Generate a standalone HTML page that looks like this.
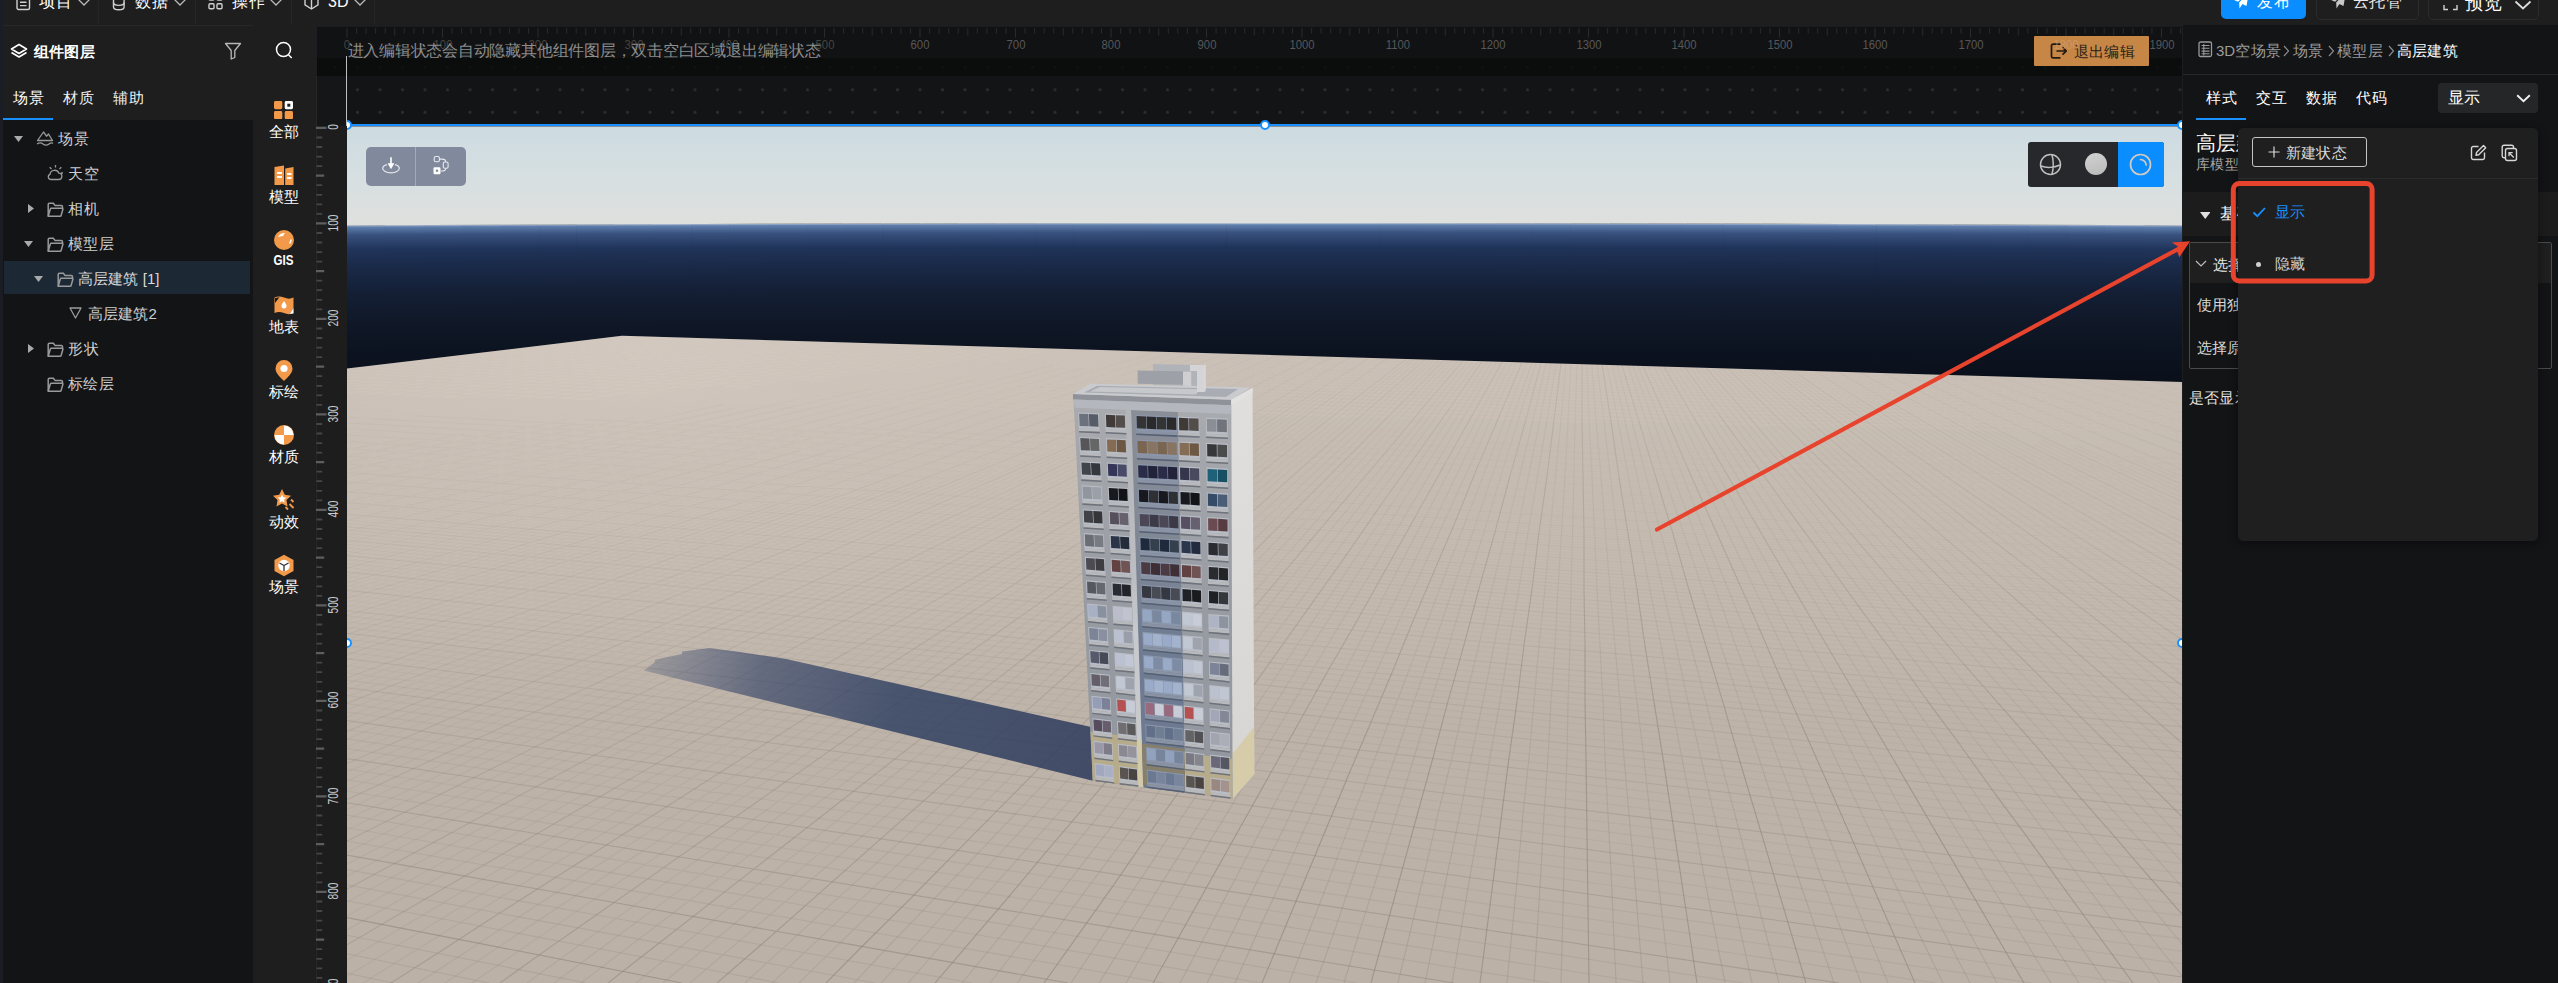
<!DOCTYPE html>
<html lang="zh"><head><meta charset="utf-8"><title>3D editor</title><style>html,body{margin:0;padding:0;}
html{width:2558px;height:983px;overflow:hidden;background:#131416;}
body{width:2558px;height:983px;overflow:hidden;background:#131416;position:relative;font-family:"Liberation Sans",sans-serif;}
.b{position:absolute;display:block;}
.t{position:absolute;white-space:nowrap;overflow:visible;}
.rl{font-size:12px;line-height:14px;height:14px;text-align:center;transform:scaleX(.94);}
.vl{font-size:14px;line-height:16px;height:16px;width:40px;text-align:center;color:#c9c9c9;transform:rotate(-90deg) scaleX(.73);}
</style></head>
<body>
<div class="b" style="left:0;top:0;width:2558px;height:983px;overflow:hidden;">
<div class="b" style="left:0px;top:0px;width:2558px;height:26px;background:#1e1e1e;"></div>
<div class="b" style="left:3px;top:26px;width:250px;height:94px;background:#1e1e1e;"></div>
<div class="b" style="left:3px;top:120px;width:250px;height:863px;background:#131416;"></div>
<div class="b" style="left:253px;top:26px;width:63px;height:957px;background:#1e1e1e;"></div>
<div class="b" style="left:0px;top:0px;width:3px;height:983px;background:#1b1d24;"></div>
<div class="b" style="left:3px;top:25px;width:250px;height:1px;background:#25272b;"></div>
<div class="b" style="left:98px;top:0px;width:1px;height:24px;background:#252627;"></div>
<div class="b" style="left:195px;top:0px;width:1px;height:24px;background:#252627;"></div>
<div class="b" style="left:291px;top:0px;width:1px;height:24px;background:#252627;"></div>
<div class="b" style="left:374px;top:0px;width:1px;height:24px;background:#252627;"></div>
<svg class="b" style="left:16px;top:-6px;" width="15" height="17" viewBox="0 0 15 17"><rect x="1" y="1" width="12.5" height="14.5" rx="1.5" fill="none" stroke="#d0d0d0" stroke-width="1.4"/><path d="M4 8.2h6.5M4 11.6h6.5" stroke="#d0d0d0" stroke-width="1.4"/></svg>
<div class="t" style="left:39px;top:-8.0px;font-size:16px;line-height:20px;height:20px;color:#fff;width:32.6px;text-align:justify;text-align-last:justify;text-justify:inter-character;">项目</div>
<svg class="b" style="left:78px;top:-1px;" width="12" height="8" viewBox="0 0 12 8"><path d="M0.5 0.5 L6.0 6 L11.5 0.5" fill="none" stroke="#bbb" stroke-width="1.3"/></svg>
<svg class="b" style="left:112px;top:-6px;" width="14" height="17" viewBox="0 0 14 17"><path d="M1.5 3.5v9.5c0 1.6 2.4 2.8 5.3 2.8s5.3-1.2 5.3-2.8V3.5" fill="none" stroke="#d0d0d0" stroke-width="1.4"/><path d="M1.5 8.6c0 1.6 2.4 2.8 5.3 2.8s5.3-1.2 5.3-2.8" fill="none" stroke="#d0d0d0" stroke-width="1.4"/></svg>
<div class="t" style="left:135px;top:-8.0px;font-size:16px;line-height:20px;height:20px;color:#fff;width:32.6px;text-align:justify;text-align-last:justify;text-justify:inter-character;">数据</div>
<svg class="b" style="left:174px;top:-1px;" width="12" height="8" viewBox="0 0 12 8"><path d="M0.5 0.5 L6.0 6 L11.5 0.5" fill="none" stroke="#bbb" stroke-width="1.3"/></svg>
<svg class="b" style="left:208px;top:-6px;" width="15" height="17" viewBox="0 0 15 17"><rect x="1" y="0" width="5" height="6" rx="1" fill="none" stroke="#d0d0d0" stroke-width="1.4"/><rect x="9" y="0" width="5" height="6" rx="1" fill="none" stroke="#d0d0d0" stroke-width="1.4"/><rect x="1" y="9.8" width="5" height="5" rx="1" fill="none" stroke="#d0d0d0" stroke-width="1.4"/><rect x="9" y="9.8" width="5" height="5" rx="1" fill="none" stroke="#d0d0d0" stroke-width="1.4"/></svg>
<div class="t" style="left:232px;top:-8.0px;font-size:16px;line-height:20px;height:20px;color:#fff;width:32.6px;text-align:justify;text-align-last:justify;text-justify:inter-character;">操作</div>
<svg class="b" style="left:270px;top:-1px;" width="12" height="8" viewBox="0 0 12 8"><path d="M0.5 0.5 L6.0 6 L11.5 0.5" fill="none" stroke="#bbb" stroke-width="1.3"/></svg>
<svg class="b" style="left:304px;top:-6px;" width="15" height="17" viewBox="0 0 15 17"><path d="M7.5 -2L14 1.7v9.2L7.5 15 1 10.9V1.7z" fill="none" stroke="#d0d0d0" stroke-width="1.4"/><path d="M1 1.7l6.5 3.9L14 1.7M7.5 5.6V15" fill="none" stroke="#d0d0d0" stroke-width="1.4"/></svg>
<div class="t" style="left:328px;top:-8.0px;font-size:16px;line-height:20px;height:20px;color:#fff;width:21.1px;text-align:justify;text-align-last:justify;text-justify:inter-character;">3D</div>
<svg class="b" style="left:354px;top:-1px;" width="12" height="8" viewBox="0 0 12 8"><path d="M0.5 0.5 L6.0 6 L11.5 0.5" fill="none" stroke="#bbb" stroke-width="1.3"/></svg>
<div class="b" style="left:2221px;top:-6px;width:85px;height:25px;background:#0a8dff;border-radius:5px;"></div>
<svg class="b" style="left:2232px;top:-8px;" width="18" height="18" viewBox="0 0 18 18"><path d="M17 0L1 7.5l5 2.300L17 0zM17 0L7.200 10.500l.300 6 2.600-4zM17 0L8.300 11l6.200 3z" fill="#fff"/></svg>
<div class="t" style="left:2257px;top:-8.5px;font-size:16px;line-height:20px;height:20px;color:#fff;width:32.6px;text-align:justify;text-align-last:justify;text-justify:inter-character;">发布</div>
<div class="b" style="left:2316px;top:-6px;width:101px;height:24px;background:transparent;border:1px solid #2b2c2e;border-radius:5px;"></div>
<svg class="b" style="left:2329px;top:-8px;" width="18" height="18" viewBox="0 0 18 18"><path d="M17 0L1 7.500l5 2.300L17 0zM17 0L7.200 10.500l.300 6 2.600-4zM17 0L8.300 11l6.200 3z" fill="#c8c8c8"/></svg>
<div class="t" style="left:2353px;top:-8.0px;font-size:16px;line-height:20px;height:20px;color:#e8e8e8;width:48.6px;text-align:justify;text-align-last:justify;text-justify:inter-character;">云托管</div>
<div class="b" style="left:2428px;top:-6px;width:109px;height:24px;background:transparent;border:1px solid #2b2c2e;border-radius:5px;"></div>
<svg class="b" style="left:2443px;top:-1px;" width="15" height="12" viewBox="0 0 15 12"><path d="M1 6v4.5h4M14 6v4.5h-4" fill="none" stroke="#d0d0d0" stroke-width="1.4"/></svg>
<div class="t" style="left:2465px;top:-8.0px;font-size:18px;line-height:22px;height:22px;color:#fff;width:36.6px;text-align:justify;text-align-last:justify;text-justify:inter-character;">预览</div>
<svg class="b" style="left:2514px;top:0px;" width="18" height="11" viewBox="0 0 18 11"><path d="M1.5 1.5L9 8.5l7.5-7" fill="none" stroke="#ddd" stroke-width="1.8"/></svg>
<svg class="b" style="left:10px;top:43px;" width="18" height="16" viewBox="0 0 18 16"><path d="M9 1.5L16.5 6 9 10.5 1.5 6z" fill="none" stroke="#fff" stroke-width="1.6" stroke-linejoin="round"/><path d="M1.5 9.5L9 14l7.5-4.5" fill="none" stroke="#fff" stroke-width="1.6" stroke-linejoin="round"/></svg>
<div class="t" style="left:34px;top:41.5px;font-size:15px;line-height:19px;height:19px;color:#fff;font-weight:700;width:60.6px;text-align:justify;text-align-last:justify;text-justify:inter-character;">组件图层</div>
<svg class="b" style="left:224px;top:42px;" width="18" height="18" viewBox="0 0 18 18"><path d="M1.5 1.5h15l-5.7 7v7l-3.6 1.5v-8.5z" fill="none" stroke="#b8b8b8" stroke-width="1.3" stroke-linejoin="round"/></svg>
<svg class="b" style="left:275px;top:41px;" width="19" height="19" viewBox="0 0 19 19"><circle cx="8.5" cy="8.5" r="7" fill="none" stroke="#fff" stroke-width="1.5"/><path d="M13.5 13.8l3.2 3.2" stroke="#fff" stroke-width="1.5"/></svg>
<div class="t" style="left:13px;top:87.5px;font-size:15px;line-height:19px;height:19px;color:#fff;width:30.6px;text-align:justify;text-align-last:justify;text-justify:inter-character;">场景</div>
<div class="t" style="left:63px;top:87.5px;font-size:15px;line-height:19px;height:19px;color:#f0f0f0;width:30.6px;text-align:justify;text-align-last:justify;text-justify:inter-character;">材质</div>
<div class="t" style="left:113px;top:87.5px;font-size:15px;line-height:19px;height:19px;color:#f0f0f0;width:30.6px;text-align:justify;text-align-last:justify;text-justify:inter-character;">辅助</div>
<div class="b" style="left:3px;top:118px;width:50px;height:2px;background:#1890ff;"></div>
<div class="b" style="left:4px;top:261px;width:246px;height:33px;background:#1c2834;"></div>
<svg class="b" style="left:14px;top:135.5px;" width="9" height="6" viewBox="0 0 9 6"><path d="M0 0H9L4.5 6z" fill="#aaa"/></svg>
<svg class="b" style="left:36px;top:130px;" width="18" height="16" viewBox="0 0 18 16"><path d="M1.5 10.5L7.5 2l3 4.2 2-2.2 4 6.5z" fill="none" stroke="#9a9a9a" stroke-width="1.3" stroke-linejoin="round"/><path d="M1 14c2.5-1.6 4-1.6 6 0s4 1.6 6 0 3-1.3 4-.6" fill="none" stroke="#9a9a9a" stroke-width="1.3"/></svg>
<div class="t" style="left:58px;top:128.5px;font-size:15px;line-height:19px;height:19px;color:#cfcfcf;width:30.6px;text-align:justify;text-align-last:justify;text-justify:inter-character;">场景</div>
<svg class="b" style="left:46px;top:164px;" width="18" height="17" viewBox="0 0 18 17"><path d="M5 15.5h7.5a3.2 3.2 0 0 0 .3-6.4 4.6 4.6 0 0 0-8.8 1.2A2.7 2.7 0 0 0 5 15.5z" fill="none" stroke="#9a9a9a" stroke-width="1.3"/><path d="M9.5 3.5V1M13.5 5l1.8-1.8M5.5 5L3.7 3.2M15 9h2" stroke="#9a9a9a" stroke-width="1.3"/></svg>
<div class="t" style="left:68px;top:163.5px;font-size:15px;line-height:19px;height:19px;color:#cfcfcf;width:30.6px;text-align:justify;text-align-last:justify;text-justify:inter-character;">天空</div>
<svg class="b" style="left:28px;top:203.5px;" width="6" height="9" viewBox="0 0 6 9"><path d="M0 0V9L6 4.5z" fill="#aaa"/></svg>
<svg class="b" style="left:46.5px;top:202px;" width="17" height="16" viewBox="0 0 17 16"><path d="M1.2 14.300V2.400c0-.700.500-1.200 1.200-1.200h4l1.700 2.400h6.200c.700 0 1.200.500 1.200 1.200V6.300" fill="none" stroke="#9a9a9a" stroke-width="1.500"/><path d="M1.200 14.300L3.300 7c.100-.400.500-.700.900-.700h11c.500 0 .900.500.700 1l-1.800 6.200c-.100.500-.600.800-1.100.800z" fill="none" stroke="#9a9a9a" stroke-width="1.500" stroke-linejoin="round"/></svg>
<div class="t" style="left:68px;top:198.5px;font-size:15px;line-height:19px;height:19px;color:#cfcfcf;width:30.6px;text-align:justify;text-align-last:justify;text-justify:inter-character;">相机</div>
<svg class="b" style="left:24px;top:240.5px;" width="9" height="6" viewBox="0 0 9 6"><path d="M0 0H9L4.5 6z" fill="#aaa"/></svg>
<svg class="b" style="left:46.5px;top:237px;" width="17" height="16" viewBox="0 0 17 16"><path d="M1.2 14.300V2.400c0-.700.500-1.200 1.200-1.200h4l1.700 2.400h6.200c.700 0 1.200.500 1.200 1.200V6.300" fill="none" stroke="#9a9a9a" stroke-width="1.500"/><path d="M1.200 14.300L3.300 7c.100-.400.500-.700.900-.700h11c.500 0 .900.500.700 1l-1.800 6.200c-.100.500-.600.800-1.100.800z" fill="none" stroke="#9a9a9a" stroke-width="1.500" stroke-linejoin="round"/></svg>
<div class="t" style="left:68px;top:233.5px;font-size:15px;line-height:19px;height:19px;color:#cfcfcf;width:45.6px;text-align:justify;text-align-last:justify;text-justify:inter-character;">模型层</div>
<svg class="b" style="left:34px;top:275.5px;" width="9" height="6" viewBox="0 0 9 6"><path d="M0 0H9L4.5 6z" fill="#aaa"/></svg>
<svg class="b" style="left:56.5px;top:272px;" width="17" height="16" viewBox="0 0 17 16"><path d="M1.2 14.300V2.400c0-.700.500-1.200 1.200-1.200h4l1.700 2.400h6.200c.700 0 1.200.500 1.200 1.200V6.300" fill="none" stroke="#9a9a9a" stroke-width="1.500"/><path d="M1.200 14.300L3.300 7c.100-.400.500-.700.900-.700h11c.500 0 .900.500.700 1l-1.800 6.200c-.100.500-.600.800-1.100.800z" fill="none" stroke="#9a9a9a" stroke-width="1.500" stroke-linejoin="round"/></svg>
<div class="t" style="left:78px;top:268.5px;font-size:15px;line-height:19px;height:19px;color:#d8d8d8;width:81.5px;text-align:justify;text-align-last:justify;text-justify:inter-character;">高层建筑 [1]</div>
<svg class="b" style="left:69px;top:307px;" width="13" height="12" viewBox="0 0 13 12"><path d="M1 1h11L6.5 11z" fill="none" stroke="#9a9a9a" stroke-width="1.3" stroke-linejoin="round"/></svg>
<div class="t" style="left:88px;top:303.5px;font-size:15px;line-height:19px;height:19px;color:#cfcfcf;width:68.9px;text-align:justify;text-align-last:justify;text-justify:inter-character;">高层建筑2</div>
<svg class="b" style="left:28px;top:343.5px;" width="6" height="9" viewBox="0 0 6 9"><path d="M0 0V9L6 4.5z" fill="#aaa"/></svg>
<svg class="b" style="left:46.5px;top:342px;" width="17" height="16" viewBox="0 0 17 16"><path d="M1.2 14.300V2.400c0-.700.500-1.200 1.200-1.200h4l1.700 2.400h6.200c.700 0 1.200.500 1.200 1.200V6.300" fill="none" stroke="#9a9a9a" stroke-width="1.500"/><path d="M1.200 14.300L3.300 7c.100-.400.500-.700.900-.700h11c.500 0 .900.500.700 1l-1.800 6.200c-.100.500-.600.800-1.100.800z" fill="none" stroke="#9a9a9a" stroke-width="1.500" stroke-linejoin="round"/></svg>
<div class="t" style="left:68px;top:338.5px;font-size:15px;line-height:19px;height:19px;color:#cfcfcf;width:30.6px;text-align:justify;text-align-last:justify;text-justify:inter-character;">形状</div>
<svg class="b" style="left:46.5px;top:377px;" width="17" height="16" viewBox="0 0 17 16"><path d="M1.2 14.300V2.400c0-.700.500-1.200 1.200-1.200h4l1.700 2.400h6.200c.700 0 1.200.500 1.200 1.200V6.300" fill="none" stroke="#9a9a9a" stroke-width="1.500"/><path d="M1.200 14.300L3.300 7c.100-.400.500-.700.900-.700h11c.500 0 .900.500.700 1l-1.800 6.200c-.100.500-.600.800-1.100.800z" fill="none" stroke="#9a9a9a" stroke-width="1.500" stroke-linejoin="round"/></svg>
<div class="t" style="left:68px;top:373.5px;font-size:15px;line-height:19px;height:19px;color:#cfcfcf;width:45.6px;text-align:justify;text-align-last:justify;text-justify:inter-character;">标绘层</div>
<div class="t" style="left:268.7px;top:122.0px;font-size:15px;line-height:19px;height:19px;color:#fff;width:30.6px;text-align:justify;text-align-last:justify;text-justify:inter-character;">全部</div>
<div class="t" style="left:268.7px;top:187.0px;font-size:15px;line-height:19px;height:19px;color:#fff;width:30.6px;text-align:justify;text-align-last:justify;text-justify:inter-character;">模型</div>
<div class="t" style="left:253.2px;top:251.1px;font-size:14.5px;line-height:18.5px;height:18.5px;color:#fff;font-weight:700;width:61px;text-align:center;transform:scaleX(.8);">GIS</div>
<div class="t" style="left:268.7px;top:317.0px;font-size:15px;line-height:19px;height:19px;color:#fff;width:30.6px;text-align:justify;text-align-last:justify;text-justify:inter-character;">地表</div>
<div class="t" style="left:268.7px;top:382.0px;font-size:15px;line-height:19px;height:19px;color:#fff;width:30.6px;text-align:justify;text-align-last:justify;text-justify:inter-character;">标绘</div>
<div class="t" style="left:268.7px;top:447.0px;font-size:15px;line-height:19px;height:19px;color:#fff;width:30.6px;text-align:justify;text-align-last:justify;text-justify:inter-character;">材质</div>
<div class="t" style="left:268.7px;top:512.0px;font-size:15px;line-height:19px;height:19px;color:#fff;width:30.6px;text-align:justify;text-align-last:justify;text-justify:inter-character;">动效</div>
<div class="t" style="left:268.7px;top:577.0px;font-size:15px;line-height:19px;height:19px;color:#fff;width:30.6px;text-align:justify;text-align-last:justify;text-justify:inter-character;">场景</div>
<svg class="b" style="left:274px;top:100.8px;" width="19" height="18.2" viewBox="0 0 19 18.2"><rect x="0" y="0" width="8.300" height="8.200" rx="1.500" fill="#f39a4a"/><rect x="10.700" y="0" width="8.300" height="8.200" rx="1.500" fill="#fff"/><rect x="13.300" y="2.700" width="3" height="3" fill="#1e1e1e"/><rect x="0" y="10" width="8.300" height="8.200" rx="1.500" fill="#f39a4a"/><rect x="10.700" y="10" width="8.300" height="8.200" rx="1.500" fill="#f39a4a"/></svg>
<svg class="b" style="left:273px;top:164px;" width="22" height="22" viewBox="0 0 22 22"><path d="M1.5 3L11 1.5V21H1.5z" fill="#f39a4a"/><path d="M12.2 4.5L20.5 3v18h-8.3z" fill="#f39a4a"/><path d="M4 9h5M4 13h5M14 10h4.5M14 14h4.5" stroke="#fff" stroke-width="1.8"/></svg>
<svg class="b" style="left:273px;top:229px;" width="22" height="22" viewBox="0 0 22 22"><circle cx="11" cy="11" r="10" fill="#f39a4a"/><path d="M5 8c1.5-3 4.5-4.5 7-4l-2 3-3 .5z" fill="#fff"/><path d="M16.5 14.5c.8-1 1.5-2.5 1.5-4" stroke="#fff" stroke-width="1.4" fill="none"/></svg>
<svg class="b" style="left:273px;top:294px;" width="22" height="22" viewBox="0 0 22 22"><path d="M1.5 3.5c3-1.5 6-1.5 9.5 0s6.5 1.500 9.500 0V19c-3 1.500-6 1.500-9.500 0s-6.500-1.500-9.500 0z" fill="#f39a4a"/><path d="M11 7c1.500 2 2.500 3.500 2.500 5a2.500 2.500 0 0 1-5 0c0-1.500 1-3 2.500-5z" fill="#fff"/><path d="M2 4l4.500-.8L2 9zM20.500 14v5.500l-4 .5z" fill="#1e1e1e"/><path d="M20.500 14v5.500l-4 .5z" fill="#fff"/></svg>
<svg class="b" style="left:273px;top:359px;" width="22" height="23" viewBox="0 0 22 23"><path d="M11 1a8.500 8.500 0 0 1 8.500 8.500c0 5-5.500 9.500-8.500 12.500-3-3-8.500-7.500-8.500-12.500A8.500 8.500 0 0 1 11 1z" fill="#f39a4a"/><circle cx="11" cy="9.500" r="3.600" fill="#fff"/></svg>
<svg class="b" style="left:273px;top:424px;" width="22" height="22" viewBox="0 0 22 22"><circle cx="11" cy="11" r="10" fill="#f39a4a"/><path d="M11 11V1.500A9.500 9.500 0 0 1 20.500 11z" fill="#fff"/><path d="M11 11v9.500A9.500 9.500 0 0 1 1.500 11z" fill="#fff"/></svg>
<svg class="b" style="left:272px;top:488px;" width="24" height="24" viewBox="0 0 24 24"><path d="M10 1l2.800 5.800 6.200.9-4.500 4.400 1 6.300L10 15.500l-5.500 2.900 1-6.300L1 7.700l6.200-.9z" fill="#f39a4a"/><path d="M10 6.500l1.300 2.700 3 .4-2.200 2.100.5 3L10 13.300l-2.600 1.400.5-3-2.200-2.100 3-.4z" fill="#fff"/><path d="M17.500 16l4 4M13.500 19l2.500 2.500M19 11.500l2.500 2.500" stroke="#f39a4a" stroke-width="1.800"/></svg>
<svg class="b" style="left:273px;top:554px;" width="22" height="23" viewBox="0 0 22 23"><path d="M11 .8l9.500 5.200v11L11 22.200 1.500 17V6z" fill="#f39a4a"/><circle cx="11" cy="11.500" r="5.800" fill="#fff"/><path d="M11 11.500V17M11 11.500L6.500 9M11 11.500L15.500 9" stroke="#333" stroke-width="1.300"/></svg>
<div class="b" style="left:316px;top:26px;width:1866px;height:100px;background:#131416;background-image:radial-gradient(circle,#2c2e31 1.25px,transparent 1.6px);background-size:22.5px 22.5px;background-position:30.25px 30.05px;"></div>
<div class="b" style="left:316px;top:26px;width:1866px;height:32px;background:#111213;"></div>
<div class="b" style="left:316px;top:57.5px;width:1866px;height:18px;background:rgba(9,10,10,0.78);"></div>
<div class="b" style="left:316px;top:25.5px;width:1866px;height:1px;background:#1b1c1f;"></div>
<div class="b" style="left:316px;top:26px;width:1px;height:50px;background:#1d1e21;"></div>
<div class="b" style="left:316px;top:76px;width:30.5px;height:50px;background:#151617;"></div>
<div class="b" style="left:316px;top:126px;width:30.5px;height:857px;background:#1d1d1d;"></div>
<div class="b" style="left:316px;top:76px;width:1px;height:907px;background:#262627;"></div>
<svg class="b" style="left:0;top:0" width="2558" height="983"><path d="M347.0 28.3V37.6M356.6 28.3V33.4M366.1 28.3V33.4M375.6 28.3V33.4M385.2 28.3V33.4M394.8 28.3V35.4M404.3 28.3V33.4M413.9 28.3V33.4M423.4 28.3V33.4M432.9 28.3V33.4M442.5 28.3V37.6M452.1 28.3V33.4M461.6 28.3V33.4M471.1 28.3V33.4M480.7 28.3V33.4M490.2 28.3V35.4M499.8 28.3V33.4M509.4 28.3V33.4M518.9 28.3V33.4M528.5 28.3V33.4M538.0 28.3V37.6M547.5 28.3V33.4M557.1 28.3V33.4M566.6 28.3V33.4M576.2 28.3V33.4M585.8 28.3V35.4M595.3 28.3V33.4M604.9 28.3V33.4M614.4 28.3V33.4M624.0 28.3V33.4M633.5 28.3V37.6M643.0 28.3V33.4M652.6 28.3V33.4M662.2 28.3V33.4M671.7 28.3V33.4M681.2 28.3V35.4M690.8 28.3V33.4M700.4 28.3V33.4M709.9 28.3V33.4M719.5 28.3V33.4M729.0 28.3V37.6M738.5 28.3V33.4M748.1 28.3V33.4M757.7 28.3V33.4M767.2 28.3V33.4M776.8 28.3V35.4M786.3 28.3V33.4M795.9 28.3V33.4M805.4 28.3V33.4M815.0 28.3V33.4M824.5 28.3V37.6M834.0 28.3V33.4M843.6 28.3V33.4M853.2 28.3V33.4M862.7 28.3V33.4M872.2 28.3V35.4M881.8 28.3V33.4M891.4 28.3V33.4M900.9 28.3V33.4M910.5 28.3V33.4M920.0 28.3V37.6M929.6 28.3V33.4M939.1 28.3V33.4M948.7 28.3V33.4M958.2 28.3V33.4M967.8 28.3V35.4M977.3 28.3V33.4M986.9 28.3V33.4M996.4 28.3V33.4M1006.0 28.3V33.4M1015.5 28.3V37.6M1025.1 28.3V33.4M1034.6 28.3V33.4M1044.2 28.3V33.4M1053.7 28.3V33.4M1063.2 28.3V35.4M1072.8 28.3V33.4M1082.3 28.3V33.4M1091.9 28.3V33.4M1101.5 28.3V33.4M1111.0 28.3V37.6M1120.6 28.3V33.4M1130.1 28.3V33.4M1139.7 28.3V33.4M1149.2 28.3V33.4M1158.8 28.3V35.4M1168.3 28.3V33.4M1177.8 28.3V33.4M1187.4 28.3V33.4M1197.0 28.3V33.4M1206.5 28.3V37.6M1216.1 28.3V33.4M1225.6 28.3V33.4M1235.2 28.3V33.4M1244.7 28.3V33.4M1254.2 28.3V35.4M1263.8 28.3V33.4M1273.3 28.3V33.4M1282.9 28.3V33.4M1292.5 28.3V33.4M1302.0 28.3V37.6M1311.6 28.3V33.4M1321.1 28.3V33.4M1330.7 28.3V33.4M1340.2 28.3V33.4M1349.8 28.3V35.4M1359.3 28.3V33.4M1368.8 28.3V33.4M1378.4 28.3V33.4M1388.0 28.3V33.4M1397.5 28.3V37.6M1407.1 28.3V33.4M1416.6 28.3V33.4M1426.2 28.3V33.4M1435.7 28.3V33.4M1445.2 28.3V35.4M1454.8 28.3V33.4M1464.4 28.3V33.4M1473.9 28.3V33.4M1483.5 28.3V33.4M1493.0 28.3V37.6M1502.6 28.3V33.4M1512.1 28.3V33.4M1521.7 28.3V33.4M1531.2 28.3V33.4M1540.8 28.3V35.4M1550.3 28.3V33.4M1559.9 28.3V33.4M1569.4 28.3V33.4M1579.0 28.3V33.4M1588.5 28.3V37.6M1598.1 28.3V33.4M1607.6 28.3V33.4M1617.2 28.3V33.4M1626.7 28.3V33.4M1636.2 28.3V35.4M1645.8 28.3V33.4M1655.4 28.3V33.4M1664.9 28.3V33.4M1674.5 28.3V33.4M1684.0 28.3V37.6M1693.6 28.3V33.4M1703.1 28.3V33.4M1712.7 28.3V33.4M1722.2 28.3V33.4M1731.8 28.3V35.4M1741.3 28.3V33.4M1750.9 28.3V33.4M1760.4 28.3V33.4M1770.0 28.3V33.4M1779.5 28.3V37.6M1789.1 28.3V33.4M1798.6 28.3V33.4M1808.2 28.3V33.4M1817.7 28.3V33.4M1827.2 28.3V35.4M1836.8 28.3V33.4M1846.4 28.3V33.4M1855.9 28.3V33.4M1865.5 28.3V33.4M1875.0 28.3V37.6M1884.6 28.3V33.4M1894.1 28.3V33.4M1903.7 28.3V33.4M1913.2 28.3V33.4M1922.8 28.3V35.4M1932.3 28.3V33.4M1941.9 28.3V33.4M1951.4 28.3V33.4M1961.0 28.3V33.4M1970.5 28.3V37.6M1980.1 28.3V33.4M1989.6 28.3V33.4M1999.2 28.3V33.4M2008.7 28.3V33.4M2018.3 28.3V35.4M2027.8 28.3V33.4M2037.4 28.3V33.4M2046.9 28.3V33.4M2056.4 28.3V33.4M2066.0 28.3V37.6M2075.6 28.3V33.4M2085.1 28.3V33.4M2094.7 28.3V33.4M2104.2 28.3V33.4M2113.8 28.3V35.4M2123.3 28.3V33.4M2132.9 28.3V33.4M2142.4 28.3V33.4M2151.9 28.3V33.4M2161.5 28.3V37.6M2171.1 28.3V33.4M2180.6 28.3V33.4" stroke="#292a2c" stroke-width="1.1"/><path d="M316.5 137.5H322.2M316.5 147.0H322.2M316.5 156.6H322.2M316.5 166.1H322.2M316.5 185.2H322.2M316.5 194.8H322.2M316.5 204.3H322.2M316.5 213.9H322.2M316.5 233.0H322.2M316.5 242.5H322.2M316.5 252.1H322.2M316.5 261.6H322.2M316.5 280.7H322.2M316.5 290.2H322.2M316.5 299.8H322.2M316.5 309.4H322.2M316.5 328.5H322.2M316.5 338.0H322.2M316.5 347.6H322.2M316.5 357.1H322.2M316.5 376.2H322.2M316.5 385.8H322.2M316.5 395.3H322.2M316.5 404.9H322.2M316.5 424.0H322.2M316.5 433.5H322.2M316.5 443.1H322.2M316.5 452.6H322.2M316.5 471.7H322.2M316.5 481.2H322.2M316.5 490.8H322.2M316.5 500.4H322.2M316.5 519.5H322.2M316.5 529.0H322.2M316.5 538.6H322.2M316.5 548.1H322.2M316.5 567.2H322.2M316.5 576.8H322.2M316.5 586.3H322.2M316.5 595.9H322.2M316.5 615.0H322.2M316.5 624.5H322.2M316.5 634.1H322.2M316.5 643.6H322.2M316.5 662.7H322.2M316.5 672.2H322.2M316.5 681.8H322.2M316.5 691.4H322.2M316.5 710.5H322.2M316.5 720.0H322.2M316.5 729.6H322.2M316.5 739.1H322.2M316.5 758.2H322.2M316.5 767.8H322.2M316.5 777.3H322.2M316.5 786.9H322.2M316.5 806.0H322.2M316.5 815.5H322.2M316.5 825.1H322.2M316.5 834.6H322.2M316.5 853.7H322.2M316.5 863.2H322.2M316.5 872.8H322.2M316.5 882.4H322.2M316.5 901.5H322.2M316.5 911.0H322.2M316.5 920.6H322.2M316.5 930.1H322.2M316.5 949.2H322.2M316.5 958.8H322.2M316.5 968.3H322.2M316.5 977.9H322.2" stroke="#464646" stroke-width="1.8"/><path d="M316 127.9H326.5M316 175.7H324.2M316 223.4H326.5M316 271.1H324.2M316 318.9H326.5M316 366.7H324.2M316 414.4H326.5M316 462.1H324.2M316 509.9H326.5M316 557.7H324.2M316 605.4H326.5M316 653.1H324.2M316 700.9H326.5M316 748.6H324.2M316 796.4H326.5M316 844.1H324.2M316 891.9H326.5M316 939.7H324.2" stroke="#5e5e5e" stroke-width="2.2"/></svg>
<div class="t rl" style="left:327.0px;top:38px;width:40px;color:#47443f">0</div>
<div class="t rl" style="left:422.5px;top:38px;width:40px;color:#47443f">100</div>
<div class="t rl" style="left:518.0px;top:38px;width:40px;color:#47443f">200</div>
<div class="t rl" style="left:613.5px;top:38px;width:40px;color:#47443f">300</div>
<div class="t rl" style="left:709.0px;top:38px;width:40px;color:#47443f">400</div>
<div class="t rl" style="left:804.5px;top:38px;width:40px;color:#47443f">500</div>
<div class="t rl" style="left:900.0px;top:38px;width:40px;color:#56575a">600</div>
<div class="t rl" style="left:995.5px;top:38px;width:40px;color:#56575a">700</div>
<div class="t rl" style="left:1091.0px;top:38px;width:40px;color:#56575a">800</div>
<div class="t rl" style="left:1186.5px;top:38px;width:40px;color:#56575a">900</div>
<div class="t rl" style="left:1282.0px;top:38px;width:40px;color:#56575a">1000</div>
<div class="t rl" style="left:1377.5px;top:38px;width:40px;color:#56575a">1100</div>
<div class="t rl" style="left:1473.0px;top:38px;width:40px;color:#56575a">1200</div>
<div class="t rl" style="left:1568.5px;top:38px;width:40px;color:#56575a">1300</div>
<div class="t rl" style="left:1664.0px;top:38px;width:40px;color:#56575a">1400</div>
<div class="t rl" style="left:1759.5px;top:38px;width:40px;color:#56575a">1500</div>
<div class="t rl" style="left:1855.0px;top:38px;width:40px;color:#56575a">1600</div>
<div class="t rl" style="left:1950.5px;top:38px;width:40px;color:#56575a">1700</div>
<div class="t rl" style="left:2046.0px;top:38px;width:40px;color:#56575a">1800</div>
<div class="t rl" style="left:2141.5px;top:38px;width:40px;color:#56575a">1900</div>
<div class="t vl" style="left:313.2px;top:119.4px;">0</div>
<div class="t vl" style="left:313.2px;top:214.9px;">100</div>
<div class="t vl" style="left:313.2px;top:310.4px;">200</div>
<div class="t vl" style="left:313.2px;top:405.9px;">300</div>
<div class="t vl" style="left:313.2px;top:501.4px;">400</div>
<div class="t vl" style="left:313.2px;top:596.9px;">500</div>
<div class="t vl" style="left:313.2px;top:692.4px;">600</div>
<div class="t vl" style="left:313.2px;top:787.9px;">700</div>
<div class="t vl" style="left:313.2px;top:883.4px;">800</div>
<div class="t vl" style="left:313.2px;top:978.9px;">900</div>
<div class="t" style="left:347.5px;top:40.5px;font-size:16px;line-height:20px;height:20px;color:#8d8d8d;width:473.1px;letter-spacing:-0.25px;text-align:justify;text-align-last:justify;text-justify:inter-character;">进入编辑状态会自动隐藏其他组件图层，双击空白区域退出编辑状态</div>
<div class="b" style="left:2034px;top:36px;width:115px;height:30px;background:#c68646;border-radius:1px;"></div>
<svg class="b" style="left:2050px;top:43px;" width="17" height="16" viewBox="0 0 17 16"><path d="M10.500 1.200H3.200c-1 0-1.700.700-1.700 1.700v10.200c0 1 .700 1.700 1.700 1.700h7.300" fill="none" stroke="#241a10" stroke-width="1.700"/><path d="M6.500 8h9.500M12.500 4.300L16.200 8l-3.700 3.700" fill="none" stroke="#241a10" stroke-width="1.700"/></svg>
<div class="t" style="left:2074px;top:41.5px;font-size:15px;line-height:19px;height:19px;color:#2c2116;width:60.6px;text-align:justify;text-align-last:justify;text-justify:inter-character;">退出编辑</div>
<div class="t rl" style="left:2046px;top:38px;width:40px;color:#d6a677;opacity:.55">1800</div>
<div class="b" style="left:346px;top:56px;width:1px;height:70px;background:#bdbdbd;"></div>
<svg class="b" style="left:0;top:0" width="2558" height="983" viewBox="0 0 2558 983"><defs>
<linearGradient id="gsky" x1="0" y1="126" x2="0" y2="224" gradientUnits="userSpaceOnUse"><stop offset="0" stop-color="#ccdbe1"/><stop offset="0.5" stop-color="#d6dfe1"/><stop offset="1" stop-color="#dfe0de"/></linearGradient>
<linearGradient id="gsea" x1="0" y1="223" x2="0" y2="385" gradientUnits="userSpaceOnUse"><stop offset="0" stop-color="#aebdd2"/><stop offset="0.012" stop-color="#5f7eac"/><stop offset="0.06" stop-color="#38517e"/><stop offset="0.15" stop-color="#20345a"/><stop offset="0.25" stop-color="#1a2a49"/><stop offset="0.42" stop-color="#141f35"/><stop offset="0.6" stop-color="#101828"/><stop offset="0.78" stop-color="#0c1320"/><stop offset="1" stop-color="#0a0f19"/></linearGradient>
<linearGradient id="ggnd" x1="0" y1="336" x2="0" y2="983" gradientUnits="userSpaceOnUse"><stop offset="0" stop-color="#cdc3b9"/><stop offset="0.18" stop-color="#c8beb4"/><stop offset="0.44" stop-color="#c2b8ae"/><stop offset="0.6" stop-color="#bdb3a9"/><stop offset="1" stop-color="#bbb1a7"/></linearGradient>
<linearGradient id="gfade" x1="0" y1="360" x2="0" y2="983" gradientUnits="userSpaceOnUse"><stop offset="0" stop-color="#988d82" stop-opacity="0"/><stop offset="0.07" stop-color="#988d82" stop-opacity="0.05"/><stop offset="0.2" stop-color="#988d82" stop-opacity="0.17"/><stop offset="0.4" stop-color="#988d82" stop-opacity="0.3"/><stop offset="1" stop-color="#988d82" stop-opacity="0.62"/></linearGradient>
<linearGradient id="gfade2" x1="0" y1="480" x2="0" y2="983" gradientUnits="userSpaceOnUse"><stop offset="0" stop-color="#a2978c" stop-opacity="0"/><stop offset="0.25" stop-color="#a2978c" stop-opacity="0.04"/><stop offset="0.6" stop-color="#a2978c" stop-opacity="0.25"/><stop offset="1" stop-color="#a2978c" stop-opacity="0.45"/></linearGradient>
<clipPath id="cgnd"><polygon points="347,368.6 622,335.8 2182,381.9 2182,983 347,983"/></clipPath>
<linearGradient id="gshadow" x1="1092" y1="755" x2="650" y2="655" gradientUnits="userSpaceOnUse"><stop offset="0" stop-color="#283658" stop-opacity="0.82"/><stop offset="0.45" stop-color="#27395d" stop-opacity="0.78"/><stop offset="0.75" stop-color="#283961" stop-opacity="0.6"/><stop offset="1" stop-color="#2a3e68" stop-opacity="0.25"/></linearGradient>
<radialGradient id="ghl" cx="650" cy="350" r="330" gradientUnits="userSpaceOnUse" gradientTransform="translate(650 350) scale(1.9 1) translate(-650 -350)"><stop offset="0" stop-color="#fff6ee" stop-opacity="0.15"/><stop offset="0.5" stop-color="#fff6ee" stop-opacity="0.07"/><stop offset="1" stop-color="#fff6ee" stop-opacity="0"/></radialGradient>
<linearGradient id="grecess" x1="0" y1="405" x2="0" y2="795" gradientUnits="userSpaceOnUse"><stop offset="0" stop-color="#8a8e97"/><stop offset="0.4" stop-color="#7f8794"/><stop offset="0.6" stop-color="#6f7c92"/><stop offset="1" stop-color="#6c7890"/></linearGradient>
<linearGradient id="gface" x1="0" y1="400" x2="0" y2="795" gradientUnits="userSpaceOnUse"><stop offset="0" stop-color="#a9abaf"/><stop offset="0.35" stop-color="#9da0a6"/><stop offset="0.6" stop-color="#969aa1"/><stop offset="1" stop-color="#92969e"/></linearGradient>
<linearGradient id="gstrip" x1="0" y1="400" x2="0" y2="795" gradientUnits="userSpaceOnUse"><stop offset="0" stop-color="#b2b4b8"/><stop offset="0.45" stop-color="#bcbec2"/><stop offset="0.6" stop-color="#c8c9cd"/><stop offset="1" stop-color="#c8c9cd"/></linearGradient>
<linearGradient id="gside" x1="0" y1="390" x2="0" y2="800" gradientUnits="userSpaceOnUse"><stop offset="0" stop-color="#e0dfdd"/><stop offset="1" stop-color="#d6d5d3"/></linearGradient>
</defs><rect x="347.0" y="223" width="38.8" height="165" fill="url(#gsea)" transform="translate(0 2.21)"/><rect x="385.2" y="223" width="38.8" height="165" fill="url(#gsea)" transform="translate(0 2.02)"/><rect x="423.5" y="223" width="38.8" height="165" fill="url(#gsea)" transform="translate(0 1.85)"/><rect x="461.7" y="223" width="38.8" height="165" fill="url(#gsea)" transform="translate(0 1.68)"/><rect x="499.9" y="223" width="38.8" height="165" fill="url(#gsea)" transform="translate(0 1.52)"/><rect x="538.1" y="223" width="38.8" height="165" fill="url(#gsea)" transform="translate(0 1.37)"/><rect x="576.4" y="223" width="38.8" height="165" fill="url(#gsea)" transform="translate(0 1.22)"/><rect x="614.6" y="223" width="38.8" height="165" fill="url(#gsea)" transform="translate(0 1.09)"/><rect x="652.8" y="223" width="38.8" height="165" fill="url(#gsea)" transform="translate(0 0.96)"/><rect x="691.1" y="223" width="38.8" height="165" fill="url(#gsea)" transform="translate(0 0.84)"/><rect x="729.3" y="223" width="38.8" height="165" fill="url(#gsea)" transform="translate(0 0.73)"/><rect x="767.5" y="223" width="38.8" height="165" fill="url(#gsea)" transform="translate(0 0.62)"/><rect x="805.8" y="223" width="38.8" height="165" fill="url(#gsea)" transform="translate(0 0.53)"/><rect x="844.0" y="223" width="38.8" height="165" fill="url(#gsea)" transform="translate(0 0.44)"/><rect x="882.2" y="223" width="38.8" height="165" fill="url(#gsea)" transform="translate(0 0.36)"/><rect x="920.4" y="223" width="38.8" height="165" fill="url(#gsea)" transform="translate(0 0.29)"/><rect x="958.7" y="223" width="38.8" height="165" fill="url(#gsea)" transform="translate(0 0.22)"/><rect x="996.9" y="223" width="38.8" height="165" fill="url(#gsea)" transform="translate(0 0.17)"/><rect x="1035.1" y="223" width="38.8" height="165" fill="url(#gsea)" transform="translate(0 0.12)"/><rect x="1073.4" y="223" width="38.8" height="165" fill="url(#gsea)" transform="translate(0 0.08)"/><rect x="1111.6" y="223" width="38.8" height="165" fill="url(#gsea)" transform="translate(0 0.05)"/><rect x="1149.8" y="223" width="38.8" height="165" fill="url(#gsea)" transform="translate(0 0.02)"/><rect x="1188.0" y="223" width="38.8" height="165" fill="url(#gsea)" transform="translate(0 0.01)"/><rect x="1226.3" y="223" width="38.8" height="165" fill="url(#gsea)" transform="translate(0 0.00)"/><rect x="1264.5" y="223" width="38.8" height="165" fill="url(#gsea)" transform="translate(0 0.00)"/><rect x="1302.7" y="223" width="38.8" height="165" fill="url(#gsea)" transform="translate(0 0.01)"/><rect x="1341.0" y="223" width="38.8" height="165" fill="url(#gsea)" transform="translate(0 0.02)"/><rect x="1379.2" y="223" width="38.8" height="165" fill="url(#gsea)" transform="translate(0 0.05)"/><rect x="1417.4" y="223" width="38.8" height="165" fill="url(#gsea)" transform="translate(0 0.08)"/><rect x="1455.6" y="223" width="38.8" height="165" fill="url(#gsea)" transform="translate(0 0.12)"/><rect x="1493.9" y="223" width="38.8" height="165" fill="url(#gsea)" transform="translate(0 0.17)"/><rect x="1532.1" y="223" width="38.8" height="165" fill="url(#gsea)" transform="translate(0 0.22)"/><rect x="1570.3" y="223" width="38.8" height="165" fill="url(#gsea)" transform="translate(0 0.29)"/><rect x="1608.6" y="223" width="38.8" height="165" fill="url(#gsea)" transform="translate(0 0.36)"/><rect x="1646.8" y="223" width="38.8" height="165" fill="url(#gsea)" transform="translate(0 0.44)"/><rect x="1685.0" y="223" width="38.8" height="165" fill="url(#gsea)" transform="translate(0 0.53)"/><rect x="1723.2" y="223" width="38.8" height="165" fill="url(#gsea)" transform="translate(0 0.62)"/><rect x="1761.5" y="223" width="38.8" height="165" fill="url(#gsea)" transform="translate(0 0.73)"/><rect x="1799.7" y="223" width="38.8" height="165" fill="url(#gsea)" transform="translate(0 0.84)"/><rect x="1837.9" y="223" width="38.8" height="165" fill="url(#gsea)" transform="translate(0 0.96)"/><rect x="1876.2" y="223" width="38.8" height="165" fill="url(#gsea)" transform="translate(0 1.09)"/><rect x="1914.4" y="223" width="38.8" height="165" fill="url(#gsea)" transform="translate(0 1.22)"/><rect x="1952.6" y="223" width="38.8" height="165" fill="url(#gsea)" transform="translate(0 1.37)"/><rect x="1990.9" y="223" width="38.8" height="165" fill="url(#gsea)" transform="translate(0 1.52)"/><rect x="2029.1" y="223" width="38.8" height="165" fill="url(#gsea)" transform="translate(0 1.68)"/><rect x="2067.3" y="223" width="38.8" height="165" fill="url(#gsea)" transform="translate(0 1.85)"/><rect x="2105.5" y="223" width="38.8" height="165" fill="url(#gsea)" transform="translate(0 2.02)"/><rect x="2143.8" y="223" width="38.8" height="165" fill="url(#gsea)" transform="translate(0 2.21)"/><path d="M347 126H2182V225.4Q1264.5 220.9 347 225.4Z" fill="url(#gsky)"/><polygon points="347,368.6 622,335.8 2182,381.9 2182,983 347,983" fill="url(#ggnd)"/><polygon points="347,368.6 622,335.8 2182,381.9 2182,983 347,983" fill="url(#ghl)"/><g clip-path="url(#cgnd)" stroke="#8f857b" stroke-width="1.1" fill="none"><path d="M625 336.1L347 369.0M638 336.5L347 371.6M651 336.9L347 374.2M665 337.3L347 376.9M678 337.6L347 379.7M691 338.0L347 382.6M705 338.4L347 385.6M718 338.8L347 388.7M732 339.2L347 392.0M746 339.6L347 395.4M759 340.0L347 398.9M773 340.5L347 402.6M787 340.9L347 406.4M802 341.3L347 410.4M816 341.7L347 414.6M830 342.1L347 418.9M845 342.6L347 423.5M403 415.5L347 424.7M403 416.6L347 425.8M404 417.7L347 427.0M859 343.0L347 428.3M462 410.3L347 429.5M462 411.3L347 430.7M463 412.3L347 432.0M874 343.4L347 433.3M524 404.2L347 434.6M507 408.2L347 435.9M508 409.2L347 437.2M889 343.9L347 438.5M565 401.5L347 439.9M567 402.4L347 441.3M568 403.3L347 442.7M904 344.3L347 444.1M627 395.0L347 445.5M629 395.7L347 447.0M631 396.5L347 448.4M919 344.7L404 439.4M635 398.1L347 451.4M694 388.2L347 452.9M697 388.8L347 454.5M934 345.2L464 433.9M723 386.1L347 457.6M725 386.8L347 459.3M728 387.5L347 460.9M949 345.6L566 420.0M732 388.8L347 464.2M735 389.5L347 465.9M793 379.2L347 467.7M964 346.1L571 424.6M799 380.3L347 471.2M801 380.9L347 473.0M804 381.4L347 474.8M980 346.5L635 417.5M810 382.6L347 478.6M871 371.1L347 480.5M874 371.5L347 482.4M995 347.0L725 404.2M890 370.3L347 486.4M894 370.7L347 488.4M897 371.2L347 490.5M1011 347.4L734 407.9M903 372.1L347 494.7M907 372.5L347 496.9M966 360.4L347 499.1M1027 347.9L800 399.0M974 361.0L347 503.6M977 361.3L347 505.9M981 361.6L347 508.2M1042 348.4L869 388.9M988 362.2L347 513.0M996 361.5L347 515.5M1000 361.8L347 518.0M1058 348.9L894 388.5M1062 349.0L347 523.1M1066 349.1L347 525.8M1071 349.2L347 528.4M1075 349.3L963 377.3M1079 349.4L347 534.0M1083 349.6L347 536.8M1087 349.7L347 539.7M1091 349.8L976 379.5M1095 349.9L347 545.6M1099 350.0L347 548.7M1103 350.2L347 551.8M1107 350.3L1053 364.9M1111 350.4L347 558.2M1115 350.5L347 561.5M1120 350.7L347 564.9M1124 350.8L1068 366.3M1128 350.9L347 571.8M1132 351.0L403 559.3M1136 351.1L403 562.7M1140 351.3L1084 367.8M1145 351.4L461 552.9M1149 351.5L462 556.3M1153 351.6L508 545.8M1161 351.9L564 535.7M1166 352.0L565 538.8M1170 352.1L566 542.0M1178 352.4L624 530.8M1182 352.5L625 534.0M1187 352.6L683 518.7M1195 352.9L686 524.7M1200 353.0L720 516.9M1204 353.1L775 501.4M1212 353.4L780 506.9M1217 353.5L836 490.3M1221 353.6L839 492.9M1230 353.9L844 498.3M1234 354.0L901 480.1M1239 354.2L904 482.6M1247 354.4L930 479.9M1252 354.5L932 482.4M1256 354.7L989 463.3M1265 354.9L995 467.9M1269 355.1L998 470.3M1274 355.2L1056 449.3M1283 355.5L1075 448.0M1287 355.6L1078 450.1M1291 355.7L1082 452.3M1300 356.0L1142 431.6M1305 356.1L1145 433.4M1309 356.2L1149 435.2M1318 356.5L1165 434.8M1323 356.6L1169 436.8M1328 356.8L1224 411.5M1337 357.0L1232 414.4M1341 357.2L1242 413.0M1346 357.3L1246 414.6M1355 357.6L1254 417.9M1360 357.7L1309 388.7M1364 357.9L1314 389.1M1373 358.1L1326 389.4M1378 358.3L1329 391.1M1383 358.4L1335 391.3M1392 358.7L1344 393.4M1397 358.8L1350 393.5M1401 359.0L1356 393.6M1799 370.6L1846 403.0M1804 370.8L1851 402.0M1810 371.0L1856 401.0M1821 371.3L1866 399.1M1826 371.5L1877 402.1M1832 371.6L1882 401.1M1843 372.0L1940 426.8M1849 372.1L1944 424.9M1854 372.3L1948 423.2M1866 372.6L1971 427.8M1871 372.8L1975 426.0M1877 373.0L1979 424.2M1889 373.3L2035 444.8M1894 373.5L2038 442.3M1900 373.6L2041 440.0M1912 374.0L2074 447.8M1917 374.2L2076 445.3M1923 374.3L2130 465.6M1935 374.7L2133 459.2M1941 374.8L2134 456.1M1947 375.0L2182 472.6M1958 375.4L2182 465.4M1964 375.5L2182 462.0M1970 375.7L2182 458.6M1982 376.1L2182 452.2M1988 376.2L2182 449.1M1994 376.4L2182 446.1M2006 376.8L2182 440.4M2012 376.9L2182 437.6M2018 377.1L2182 434.9M2030 377.5L2182 429.7M2036 377.6L2182 427.2M2042 377.8L2182 424.7M2054 378.2L2182 420.0M2060 378.4L2182 417.7M2067 378.5L2182 415.5M2079 378.9L2182 411.2M2085 379.1L2182 409.1M2091 379.3L2182 407.0M2104 379.6L2182 403.1M2110 379.8L2182 401.2M2116 380.0L2182 399.3M2129 380.4L2182 395.7M2135 380.6L2182 393.9M2141 380.7L2182 392.2M2154 381.1L2182 388.9M2160 381.3L2182 387.2M2167 381.5L2182 385.7M2179 381.9L2182 382.6M613 337.1L2182 383.9M601 338.5L2182 386.3M589 339.9L2182 388.9M576 341.4L2182 391.5M564 342.9L2182 394.2M551 344.4L2182 397.0M537 346.0L2182 399.9M523 347.6L2182 402.9M509 349.3L2182 406.0M495 351.0L2182 409.2M480 352.8L2182 412.5M465 354.6L2182 416.0M449 356.4L2182 419.6M433 358.3L2182 423.3M416 360.3L2182 427.1M399 362.3L2182 431.1M381 364.4L2182 435.2M2066 431.7L2182 436.3M2065 432.7L2182 437.4M2006 431.5L2182 438.5M363 366.6L2182 439.6M1888 428.8L2182 440.7M1828 427.5L2182 441.8M1768 426.1L2182 442.9M347 368.9L2182 444.1M1649 423.3L2182 445.2M1649 424.3L2182 446.4M1590 422.9L2182 447.6M347 372.0L2182 448.8M1472 420.1L2182 450.0M1412 418.7L2182 451.2M1353 417.2L2182 452.4M347 375.2L2182 453.7M1294 416.8L2182 454.9M1235 415.3L2182 456.2M1176 413.8L2182 457.5M347 378.6L2123 456.2M1057 410.7L2182 460.1M1057 411.7L2182 461.4M998 410.2L2182 462.8M347 382.1L1886 450.9M880 407.0L2182 465.5M821 405.4L2182 466.9M821 406.4L2182 468.3M347 385.8L1708 448.1M702 403.1L2182 471.2M643 401.4L2182 472.6M643 402.5L2182 474.1M347 389.7L1472 442.3M525 399.1L2182 477.1M465 397.3L2182 478.6M465 398.4L2182 480.2M347 393.8L1235 436.3M347 394.8L2182 483.3M347 395.9L2182 484.9M347 396.9L2182 486.5M347 398.0L998 430.0M347 399.1L2182 489.8M347 400.2L2182 491.5M347 401.3L2182 493.2M347 402.5L821 426.3M347 403.6L2182 496.7M347 404.8L2182 498.5M347 406.0L2182 500.3M347 407.2L584 419.4M347 408.4L2182 503.9M347 409.6L2182 505.8M347 410.9L2182 507.7M347 412.2L406 415.3M347 413.4L2182 511.6M347 414.7L2182 513.5M347 416.1L2182 515.5M347 418.8L2182 519.6M347 420.1L2182 521.7M347 421.5L2182 523.8M347 424.4L2182 528.1M347 425.8L2182 530.3M347 427.3L2182 532.6M347 430.3L2182 537.1M347 431.9L2182 539.5M347 433.4L2182 541.8M347 436.6L2182 546.7M347 438.3L2182 549.2M347 439.9L2182 551.7M347 443.3L2182 556.8M347 445.1L2182 559.5M347 446.9L2182 562.2M347 450.5L2182 567.7M347 452.3L2182 570.5M347 454.2L2182 573.3M347 458.1L2182 579.2M347 460.1L2182 582.2M347 462.1L2182 585.3M347 466.2L2123 587.5M347 468.4L2004 582.5M347 470.5L1945 581.6M347 475.0L1768 575.5M347 477.3L1649 570.2M347 479.6L1590 569.1M347 484.4L1412 562.5M347 486.8L1353 561.4M347 489.3L1235 555.7M347 494.5L1057 548.6M347 497.1L998 547.2M347 499.8L939 545.8M347 505.4L761 538.2M347 508.3L643 532.0M347 511.2L584 530.3M347 517.2L465 527.0" stroke-opacity="0.03"/><path d="M404 439.4L347 449.9M464 433.9L347 456.1M566 420.0L347 462.5M571 424.6L347 469.4M635 417.5L347 476.7M725 404.2L347 484.4M734 407.9L347 492.6M800 399.0L347 501.3M869 388.9L347 510.6M894 388.5L456 494.1M963 377.3L515 489.2M976 379.5L576 483.3M1053 364.9L673 467.2M1068 366.3L735 459.5M403 559.3L347 575.4M403 562.7L347 579.0M1084 367.8L800 450.5M461 552.9L347 586.5M462 556.3L347 590.4M508 545.8L347 594.4M1157 351.8L833 450.4M564 535.7L347 602.6M565 538.8L347 606.8M566 542.0L347 611.1M1174 352.3L898 440.0M624 530.8L347 620.1M625 534.0L347 624.7M683 518.7L347 629.4M1191 352.8L966 427.8M686 524.7L347 639.3M720 516.9L347 644.4M775 501.4L347 649.6M1208 353.3L1047 409.8M780 506.9L347 660.4M836 490.3L347 666.1M839 492.9L347 671.8M1225 353.8L1061 414.5M844 498.3L402 663.2M901 480.1L402 669.1M904 482.6L458 653.7M1243 354.3L1137 395.3M930 479.9L506 647.2M932 482.4L507 653.0M989 463.3L561 637.2M1260 354.8L1153 399.1M995 467.9L617 626.1M998 470.3L618 631.7M1056 449.3L674 614.0M1278 355.3L1223 379.3M1075 448.0L711 610.1M1078 450.1L765 591.9M1082 452.3L767 597.1M1296 355.8L1243 380.5M1142 431.6L824 582.7M1145 433.4L826 587.9M1149 435.2L882 566.9M1165 434.8L909 565.3M1169 436.8L912 570.3M1224 411.5L966 548.2M1232 414.4L972 557.9M1242 413.0L993 552.7M1246 414.6L1046 529.1M1254 417.9L1053 538.4M1309 388.7L1106 512.4M1314 389.1L1114 514.1M1326 389.4L1135 514.3M1329 391.1L1182 489.8M1335 391.3L1191 489.9M1344 393.4L1200 497.4M1350 393.5L1209 497.5M1356 393.6L1219 497.6M1411 359.2L1274 469.3M1415 359.4L1283 469.4M1420 359.5L1291 469.5M1430 359.8L1344 437.7M1434 359.9L1352 437.8M1439 360.1L1354 443.1M1449 360.3L1369 443.4M1453 360.5L1377 443.5M1458 360.6L1380 449.5M1468 360.9L1432 405.3M1473 361.1L1438 405.5M1478 361.2L1442 409.0M1487 361.5L1455 409.3M1492 361.6L1462 409.4M1497 361.8L1468 409.6M1507 362.1L1480 413.8M1512 362.2L1486 413.9M1517 362.3L1493 414.1M1527 362.6L1507 414.3M1648 366.2L1673 417.6M1654 366.4L1680 417.8M1659 366.5L1687 417.9M1669 366.8L1699 414.2M1674 367.0L1706 414.4M1680 367.2L1713 414.5M1690 367.5L1726 414.8M1696 367.6L1733 414.4M1701 367.8L1738 412.1M1712 368.1L1790 454.5M1717 368.2L1794 450.5M1722 368.4L1806 453.8M1733 368.7L1815 446.5M1738 368.9L1819 443.1M1744 369.0L1831 447.2M1755 369.4L1883 476.8M1760 369.5L1887 472.5M1766 369.7L1904 479.4M1777 370.0L1912 471.1M1782 370.2L1960 499.7M1787 370.3L1963 494.8M1846 403.0L1990 500.2M1851 402.0L1993 495.5M1856 401.0L2042 521.0M1866 399.1L2047 510.4M1877 402.1L2080 524.6M1882 401.1L2082 519.2M1940 426.8L2134 536.4M1944 424.9L2182 557.0M1948 423.2L2182 550.5M1971 427.8L2182 538.2M1975 426.0L2182 532.4M1979 424.2L2182 526.8M2035 444.8L2182 516.2M2038 442.3L2182 511.2M2041 440.0L2182 506.3M2074 447.8L2182 497.1M2076 445.3L2182 492.7M2130 465.6L2182 488.4M2133 459.2L2182 480.3M2134 456.1L2182 476.4M1952 375.2L1998 393.9M1976 375.9L2028 395.8M2000 376.6L2091 409.9M2024 377.3L2129 413.9M2048 378.0L2182 422.3M2073 378.7L2182 413.3M2097 379.5L2182 405.0M2122 380.2L2182 397.5M2148 380.9L2182 390.5M2173 381.7L2182 384.1M2123 456.2L2182 458.8M1886 450.9L2182 464.1M1708 448.1L2182 469.7M1472 442.3L2182 475.6M1235 436.3L2182 481.7M998 430.0L2182 488.2M821 426.3L2182 495.0M584 419.4L2182 502.1M406 415.3L2182 509.6M347 417.4L2182 517.6M347 422.9L2182 525.9M347 428.8L1886 517.7M347 435.0L1590 509.0M347 441.6L1294 499.8M347 448.7L1057 493.7M347 456.1L761 483.3M347 464.2L525 476.2M2123 587.5L2182 591.6M2004 582.5L2182 594.8M1945 581.6L2182 598.1M1768 575.5L2182 604.8M1649 570.2L2182 608.2M1590 569.1L2182 611.8M1412 562.5L2182 619.0M1353 561.4L2182 622.7M1235 555.7L2182 626.5M1057 548.6L2182 634.3M998 547.2L2182 638.3M939 545.8L2182 642.4M761 538.2L2182 650.9M643 532.0L2182 655.2M584 530.3L2182 659.7M465 527.0L2182 668.8M347 520.3L2182 673.5M347 523.5L2182 678.4M347 530.1L2182 688.3M347 533.5L2182 693.5M347 537.0L2123 693.5M347 544.2L1886 682.9M347 547.9L1768 677.4M347 551.7L1649 671.8M347 559.6L1472 665.8M347 563.6L1353 659.9M347 567.8L1235 653.8M347 576.5L998 641.1M347 581.0L880 634.6M347 585.6L821 633.9M347 595.3L584 620.0M347 600.3L525 619.1M347 605.4L406 611.8" stroke-opacity="0.06"/><path d="M456 494.1L347 520.5M515 489.2L347 531.2M576 483.3L347 542.6M673 467.2L347 555.0M735 459.5L402 552.7M800 450.5L460 549.7M833 450.4L563 532.6M898 440.0L623 527.8M966 427.8L741 502.9M1047 409.8L778 504.1M1061 414.5L896 475.3M402 663.2L347 683.9M402 669.1L347 690.1M458 653.7L347 696.5M1137 395.3L927 477.4M506 647.2L347 709.9M507 653.0L347 716.9M561 637.2L347 724.1M1153 399.1L992 465.6M617 626.1L347 739.2M618 631.7L347 747.0M674 614.0L347 755.1M1223 379.3L1059 451.4M711 610.1L399 748.9M765 591.9L399 757.4M767 597.1L452 741.9M1243 380.5L1138 429.8M824 582.7L506 733.9M826 587.9L560 716.7M882 566.9L561 724.9M1314 356.4L1161 432.9M909 565.3L654 695.8M912 570.3L655 703.9M966 548.2L708 684.9M1332 356.9L1228 412.9M972 557.9L764 672.6M993 552.7L794 664.4M1046 529.1L796 672.3M1350 357.4L1300 386.8M1053 538.4L851 658.9M1106 512.4L904 636.1M1114 514.1L914 639.2M1369 358.0L1320 389.2M1135 514.3L991 608.1M1182 489.8L985 621.3M1191 489.9L999 621.4M1387 358.5L1341 391.4M1200 497.4L1056 601.5M1209 497.5L1069 601.6M1219 497.6L1128 567.0M1274 469.3L1137 579.4M1283 469.4L1150 579.5M1291 469.5L1205 542.9M1344 437.7L1216 554.5M1352 437.8L1227 554.6M1354 443.1L1268 526.2M1369 443.4L1290 526.4M1377 443.5L1301 526.5M1380 449.5L1340 494.0M1432 405.3L1360 494.2M1438 405.5L1369 494.3M1442 409.0L1371 504.7M1455 409.3L1391 504.9M1462 409.4L1401 505.0M1468 409.6L1440 457.3M1480 413.8L1452 465.5M1486 413.9L1461 465.7M1493 414.1L1470 465.8M1507 414.3L1487 466.0M1532 362.8L1492 475.6M1536 362.9L1501 475.7M1546 363.2L1533 419.6M1551 363.4L1540 419.7M1556 363.5L1547 419.8M1566 363.8L1561 420.1M1571 364.0L1568 420.2M1577 364.1L1575 420.4M1587 364.4L1589 420.6M1592 364.6L1596 420.8M1597 364.7L1604 420.9M1607 365.0L1618 421.2M1612 365.2L1625 421.3M1617 365.3L1632 421.5M1628 365.6L1665 477.9M1633 365.8L1674 478.0M1638 365.9L1680 468.8M1673 417.6L1697 469.0M1680 417.8L1706 469.1M1687 417.9L1715 469.3M1699 414.2L1728 461.6M1706 414.4L1737 461.8M1713 414.5L1778 509.3M1726 414.8L1799 509.5M1733 414.4L1808 508.0M1738 412.1L1812 500.7M1790 454.5L1829 497.8M1794 450.5L1872 532.7M1806 453.8L1889 539.2M1815 446.5L1896 524.2M1819 443.1L1940 554.5M1831 447.2L1963 564.3M1883 476.8L1968 548.4M1887 472.5L2013 575.4M1904 479.4L2043 589.1M1912 471.1L2047 572.2M1960 499.7L2093 596.8M1963 494.8L2094 588.2M1990 500.2L2134 597.4M1993 495.5L2182 620.1M2042 521.0L2182 611.0M1815 371.1L1861 400.0M2047 510.4L2182 593.8M2080 524.6L2182 585.8M2082 519.2L2182 578.2M1838 371.8L1887 400.2M2134 536.4L2182 563.8M1860 372.5L1952 421.5M1883 373.1L1983 422.6M1906 373.8L2044 437.7M1929 374.5L2081 440.4M1998 393.9L2182 469.0M2028 395.8L2182 455.4M2091 409.9L2182 443.2M2129 413.9L2182 432.2M1886 517.7L2182 534.8M1590 509.0L2182 544.2M1294 499.8L2182 554.2M1057 493.7L2182 564.9M761 483.3L2182 576.3M525 476.2L2004 576.4M347 472.7L1649 564.0M347 482.0L1294 550.8M347 491.9L998 541.0M347 502.6L643 525.8M2123 693.5L2182 698.7M1886 682.9L2182 709.6M1768 677.4L2182 715.2M1649 671.8L2182 721.0M1472 665.8L2182 732.9M1353 659.9L2182 739.1M1235 653.8L2182 745.5M998 641.1L2182 758.6M880 634.6L2182 765.5M821 633.9L2182 772.5M584 620.0L2123 780.8M525 619.1L2004 775.8M406 611.8L1827 764.3M347 616.1L1590 753.3M347 621.7L1412 741.0M347 627.4L1294 735.0M347 639.4L1057 722.5M347 645.7L939 715.9M347 652.2L821 709.2M347 665.7L584 695.1M347 672.8L465 687.7" stroke-opacity="0.09"/><path d="M402 552.7L347 568.3M460 549.7L347 582.7M563 532.6L347 598.4M623 527.8L402 598.0M741 502.9L460 596.8M778 504.1L562 579.5M896 475.3L676 556.3M927 477.4L769 539.0M992 465.6L831 532.1M1059 451.4L949 499.4M399 748.9L347 772.1M399 757.4L347 781.0M452 741.9L347 790.2M1138 429.8L980 503.8M506 733.9L347 809.5M560 716.7L347 819.7M561 724.9L347 830.2M1161 432.9L1059 483.9M654 695.8L347 852.4M655 703.9L398 837.4M708 684.9L450 821.6M1228 412.9L1125 468.9M764 672.6L503 816.0M794 664.4L546 804.0M796 672.3L597 786.8M1300 386.8L1200 445.6M851 658.9L649 779.5M904 636.1L701 759.9M914 639.2L714 764.2M1320 389.2L1222 451.7M991 608.1L800 733.1M985 621.3L838 720.0M999 621.4L856 720.0M1341 391.4L1294 424.3M1056 601.5L911 705.5M1069 601.6L929 705.6M1128 567.0L991 671.0M1406 359.1L1359 395.8M1137 579.4L1046 652.8M1150 579.5L1061 652.8M1205 542.9L1077 652.9M1425 359.6L1381 398.6M1216 554.5L1130 632.4M1227 554.6L1145 632.5M1268 526.2L1183 609.2M1444 360.2L1403 401.7M1290 526.4L1211 609.4M1301 526.5L1224 609.5M1340 494.0L1262 582.9M1360 494.2L1287 583.1M1369 494.3L1300 583.2M1371 504.7L1336 552.5M1391 504.9L1359 552.7M1401 505.0L1371 552.8M1440 457.3L1383 552.9M1452 465.5L1425 517.3M1461 465.7L1436 517.4M1470 465.8L1446 517.5M1487 466.0L1467 517.7M1492 475.6L1473 531.9M1501 475.7L1484 532.0M1533 419.6L1506 532.3M1540 419.7L1517 532.4M1547 419.8L1528 532.5M1561 420.1L1550 532.7M1568 420.2L1565 476.5M1575 420.4L1574 476.6M1589 420.6L1592 476.9M1596 420.8L1601 477.0M1604 420.9L1617 533.3M1618 421.2L1639 533.6M1625 421.3L1650 533.7M1632 421.5L1661 533.8M1665 477.9L1684 534.0M1674 478.0L1695 534.1M1680 468.8L1700 520.2M1697 469.0L1722 520.4M1706 469.1L1733 520.5M1715 469.3L1743 520.6M1728 461.6L1787 556.4M1737 461.8L1799 556.5M1778 509.3L1811 556.6M1799 509.5L1835 556.9M1808 508.0L1883 601.6M1812 500.7L1886 589.3M1829 497.8L1908 584.2M1872 532.7L1949 614.9M1889 539.2L1973 624.7M1896 524.2L2019 640.8M1940 554.5L2021 628.8M1963 564.3L2051 642.5M1749 369.2L1793 406.6M1968 548.4L2097 655.8M2013 575.4L2140 678.4M2043 589.1L2136 662.3M1771 369.8L1817 404.9M2047 572.2L2182 673.3M2093 596.8L2182 661.6M2094 588.2L2182 650.4M1793 370.5L1890 437.8M2134 597.4L2182 629.7M1861 400.0L1907 428.9M1887 400.2L1985 457.1M1952 421.5L2044 470.6M1983 422.6L2082 472.0M2044 437.7L2182 501.6M2081 440.4L2182 484.3M2004 576.4L2182 588.4M1649 564.0L2182 601.4M1294 550.8L2182 615.4M998 541.0L2182 630.4M643 525.8L1768 614.1M347 514.2L1412 601.3M347 526.8L998 582.3M347 540.5L643 566.9M2123 780.8L2182 787.0M2004 775.8L2182 794.6M1827 764.3L2182 802.4M1590 753.3L2182 818.6M1412 741.0L2182 827.1M1294 735.0L2182 835.8M1057 722.5L2182 854.0M939 715.9L2123 856.4M821 709.2L1945 844.7M584 695.1L1649 827.5M465 687.7L1472 814.8M347 680.1L1353 809.3M347 695.5L1057 789.7M347 703.6L939 783.5M347 712.0L761 768.8M347 729.6L525 754.9" stroke-opacity="0.12"/><path d="M402 598.0L347 615.5M460 596.8L347 634.3M562 579.5L347 654.9M676 556.3L457 637.3M769 539.0L558 621.1M831 532.1L669 598.6M949 499.4L785 571.4M980 503.8L874 553.1M1059 483.9L958 535.0M398 837.4L347 864.1M450 821.6L347 876.3M1125 468.9L1021 524.9M503 816.0L347 902.1M546 804.0L347 915.8M597 786.8L397 901.4M1200 445.6L1100 504.3M649 779.5L448 900.0M701 759.9L499 883.6M714 764.2L564 858.0M1222 451.7L1173 483.0M800 733.1L609 858.0M838 720.0L642 851.5M856 720.0L712 818.6M1294 424.3L1247 457.1M911 705.5L767 809.6M929 705.6L788 809.6M991 671.0L855 775.0M1359 395.8L1265 469.2M1046 652.8L909 762.8M1061 652.8L929 762.9M1077 652.9L948 762.9M1381 398.6L1336 437.6M1130 632.4L1001 749.3M1145 632.5L1062 710.4M1183 609.2L1055 733.8M1211 609.4L1131 692.4M1224 609.5L1148 692.5M1262 582.9L1183 671.8M1463 360.8L1425 405.2M1287 583.1L1215 672.0M1300 583.2L1231 672.0M1336 552.5L1265 648.2M1482 361.3L1449 409.2M1359 552.7L1295 648.3M1371 552.8L1310 648.4M1383 552.9L1354 600.7M1425 517.3L1371 620.8M1436 517.4L1385 620.9M1446 517.5L1399 621.0M1467 517.7L1447 569.4M1473 531.9L1453 588.3M1484 532.0L1466 588.4M1506 532.3L1492 588.6M1517 532.4L1506 588.7M1528 532.5L1519 588.8M1550 532.7L1545 589.0M1565 476.5L1558 589.1M1574 476.6L1571 589.2M1592 476.9L1597 589.4M1601 477.0L1610 589.4M1617 533.3L1624 589.5M1639 533.6L1650 589.7M1650 533.7L1663 589.8M1661 533.8L1676 589.9M1684 534.0L1703 590.1M1695 534.1L1716 590.2M1700 520.2L1721 571.6M1722 520.4L1771 623.2M1733 520.5L1785 623.3M1743 520.6L1800 623.4M1787 556.4L1816 603.8M1799 556.5L1861 651.3M1811 556.6L1876 651.4M1685 367.3L1719 414.7M1835 556.9L1907 651.6M1883 601.6L1920 648.4M1886 589.3L1960 677.9M1706 367.9L1743 409.9M1908 584.2L1986 670.7M1949 614.9L2027 697.1M1973 624.7L2057 710.1M1728 368.6L1769 409.3M2019 640.8L2100 718.5M2021 628.8L2142 740.2M2051 642.5L2138 720.6M1793 406.6L1836 444.0M2097 655.8L2182 727.4M2140 678.4L2182 712.7M2136 662.3L2182 698.9M1817 404.9L1862 440.0M1890 437.8L1939 471.5M1907 428.9L1999 486.7M1985 457.1L2084 514.0M2044 470.6L2136 519.7M2082 472.0L2182 521.4M1768 614.1L2182 646.6M1412 601.3L2182 664.2M998 582.3L1945 663.1M643 566.9L1531 646.1M347 555.6L1117 627.4M347 572.1L702 606.9M2123 856.4L2182 863.5M1945 844.7L2182 873.3M1649 827.5L2182 893.8M1472 814.8L2182 904.5M1353 809.3L2182 915.6M1057 789.7L2004 915.4M939 783.5L1827 903.3M761 768.8L1649 890.7M525 754.9L1357 873.2M347 738.9L1161 856.7M347 748.6L994 844.1M347 769.0L696 822.5M347 779.8L583 816.8M347 791.1L404 800.3" stroke-opacity="0.15"/><path d="M457 637.3L347 677.8M558 621.1L400 682.6M669 598.6L508 665.0M785 571.4L621 643.4M874 553.1L716 627.1M958 535.0L856 586.0M1021 524.9L917 580.9M397 901.4L347 930.0M1100 504.3L999 563.0M448 900.0L347 960.3M499 883.6L347 976.4M564 858.0L363 983.0M1173 483.0L1075 545.5M609 858.0L466 951.8M642 851.5L494 950.1M712 818.6L520 950.1M1247 457.1L1154 522.9M767 809.6L623 913.6M788 809.6L648 913.6M855 775.0L718 879.0M1265 469.2L1218 505.9M909 762.8L772 872.9M929 762.9L796 872.9M948 762.9L862 836.3M1336 437.6L1292 476.5M1001 749.3L916 827.2M1062 710.4L937 827.2M1055 733.8L970 816.9M1403 401.7L1362 443.2M1131 692.4L1052 775.4M1148 692.5L1072 775.5M1183 671.8L1105 760.7M1425 405.2L1388 449.7M1215 672.0L1143 760.8M1231 672.0L1197 716.5M1265 648.2L1194 743.8M1295 648.3L1263 696.1M1310 648.4L1280 696.2M1354 600.7L1297 696.3M1502 361.9L1473 413.7M1371 620.8L1344 672.5M1385 620.9L1360 672.6M1399 621.0L1376 672.7M1522 362.5L1500 414.2M1447 569.4L1408 672.8M1453 588.3L1434 644.7M1466 588.4L1449 644.8M1541 363.1L1526 419.4M1492 588.6L1479 644.9M1506 588.7L1494 645.0M1519 588.8L1509 645.1M1545 589.0L1539 645.3M1558 589.1L1555 645.3M1571 589.2L1570 645.4M1597 589.4L1600 645.6M1610 589.4L1615 645.7M1624 589.5L1630 645.8M1650 589.7L1661 645.9M1663 589.8L1676 646.0M1676 589.9L1691 646.1M1622 365.5L1639 421.6M1703 590.1L1721 646.2M1716 590.2L1736 646.3M1721 571.6L1763 674.5M1643 366.1L1666 417.5M1771 623.2L1795 674.6M1785 623.3L1812 674.7M1800 623.4L1828 674.8M1664 366.7L1694 418.0M1816 603.8L1875 698.6M1861 651.3L1892 698.7M1876 651.4L1909 698.8M1907 651.6L1980 746.3M1920 648.4L1995 742.0M1960 677.9L2034 766.5M1743 409.9L1779 452.0M1986 670.7L2064 757.1M2027 697.1L2104 779.4M2057 710.1L2140 795.5M1769 409.3L1810 450.0M2100 718.5L2182 796.2M2142 740.2L2182 777.3M2138 720.6L2182 759.6M1836 444.0L1879 481.3M1862 440.0L1954 510.2M1939 471.5L1988 505.2M1999 486.7L2090 544.4M2084 514.0L2133 542.4M2136 519.7L2182 544.2M1945 663.1L2182 683.3M1531 646.1L2182 704.1M1117 627.4L1886 699.3M702 606.9L1412 676.5M347 590.4L998 657.5M347 610.7L525 630.0M2004 915.4L2182 938.9M1827 903.3L2182 951.2M1649 890.7L2182 963.9M1357 873.2L2129 983.0M1161 856.7L1974 974.6M994 844.1L1759 957.0M696 822.5L1394 929.5M583 816.8L1233 918.4M404 800.3L1092 909.9M347 815.1L740 880.4M347 827.8L575 866.6M347 841.1L405 851.3" stroke-opacity="0.18"/><path d="M400 682.6L347 703.2M508 665.0L347 731.5M621 643.4L511 691.4M716 627.1L611 676.4M856 586.0L703 662.5M917 580.9L814 636.9M999 563.0L949 592.4M1075 545.5L1026 576.7M466 951.8L418 983.0M494 950.1L445 983.0M520 950.1L472 983.0M1154 522.9L1107 555.7M623 913.6L527 983.0M648 913.6L554 983.0M718 879.0L581 983.0M1218 505.9L1171 542.6M772 872.9L636 983.0M796 872.9L707 946.3M862 836.3L733 946.3M1292 476.5L1248 515.5M916 827.2L830 905.1M937 827.2L855 905.1M970 816.9L884 899.9M1362 443.2L1320 484.8M1052 775.4L973 858.5M1072 775.5L995 858.5M1105 760.7L1026 849.6M1388 449.7L1350 494.1M1143 760.8L1107 805.3M1197 716.5L1128 805.3M1194 743.8L1159 791.7M1449 409.2L1415 457.0M1263 696.1L1199 791.8M1280 696.2L1220 791.8M1297 696.3L1240 791.9M1473 413.7L1444 465.4M1344 672.5L1289 776.0M1360 672.6L1334 724.3M1376 672.7L1352 724.4M1408 672.8L1388 724.5M1434 644.7L1414 701.1M1449 644.8L1431 701.2M1479 644.9L1465 701.3M1494 645.0L1483 701.4M1509 645.1L1500 701.4M1561 363.7L1554 420.0M1539 645.3L1534 701.6M1555 645.3L1551 701.6M1570 645.4L1568 701.7M1582 364.3L1582 420.5M1600 645.6L1603 701.8M1615 645.7L1620 701.9M1630 645.8L1637 702.0M1602 364.9L1611 421.1M1661 645.9L1671 702.1M1676 646.0L1688 702.2M1691 646.1L1706 702.2M1721 646.2L1740 702.4M1736 646.3L1757 702.4M1763 674.5L1784 725.9M1795 674.6L1820 726.0M1812 674.7L1838 726.1M1828 674.8L1884 777.5M1694 418.0L1724 469.4M1875 698.6L1934 793.4M1892 698.7L1954 793.5M1909 698.8L1975 793.5M1719 414.7L1754 462.0M1980 746.3L2016 793.6M1995 742.0L2070 835.7M2034 766.5L2071 810.8M1779 452.0L1816 494.0M2064 757.1L2143 843.6M2104 779.4L2182 861.6M2140 795.5L2182 838.2M1810 450.0L1852 490.7M1879 481.3L1922 518.7M1954 510.2L1999 545.3M1988 505.2L2085 572.5M2090 544.4L2136 573.3M2133 542.4L2182 570.8M1886 699.3L2182 726.9M1412 676.5L2123 746.2M998 657.5L1590 718.6M525 630.0L1117 694.4M347 633.3L643 667.4M1974 974.6L2032 983.0M1759 957.0L1936 983.0M1394 929.5L1743 983.0M1233 918.4L1647 983.0M1092 909.9L1550 983.0M740 880.4L1357 983.0M575 866.6L1147 963.6M405 851.3L989 952.6M347 869.6L631 921.2M347 884.9L464 906.7" stroke-opacity="0.21"/><path d="M511 691.4L347 763.5M611 676.4L505 725.7M703 662.5L601 713.6M814 636.9L710 692.9M949 592.4L849 651.1M1026 576.7L929 639.2M1107 555.7L1060 588.6M1171 542.6L1125 579.3M707 946.3L663 983.0M733 946.3L690 983.0M1248 515.5L1204 554.4M830 905.1L745 983.0M855 905.1L772 983.0M884 899.9L799 983.0M1320 484.8L1279 526.3M973 858.5L893 941.5M995 858.5L919 941.5M1026 849.6L947 938.5M1107 805.3L1035 894.1M1128 805.3L1059 894.2M1159 791.7L1088 887.3M1415 457.0L1381 504.8M1199 791.8L1167 839.6M1220 791.8L1189 839.6M1240 791.9L1211 839.6M1289 776.0L1262 827.8M1334 724.3L1284 827.8M1352 724.4L1305 827.8M1500 414.2L1478 465.9M1388 724.5L1368 776.2M1414 701.1L1395 757.5M1431 701.2L1414 757.5M1526 419.4L1510 475.8M1465 701.3L1452 757.6M1483 701.4L1471 757.7M1500 701.4L1490 757.7M1534 701.6L1529 757.8M1551 701.6L1548 757.9M1568 701.7L1567 757.9M1603 701.8L1605 758.1M1620 701.9L1624 758.1M1637 702.0L1644 758.2M1671 702.1L1682 758.3M1688 702.2L1701 758.3M1706 702.2L1720 758.4M1639 421.6L1656 477.7M1740 702.4L1759 758.5M1757 702.4L1799 814.7M1784 725.9L1805 777.3M1666 417.5L1688 468.9M1820 726.0L1869 828.8M1838 726.1L1891 828.8M1884 777.5L1912 828.9M1934 793.4L1963 840.8M1954 793.5L1985 840.8M1975 793.5L2040 888.3M1754 462.0L1788 509.4M2016 793.6L2088 888.3M2070 835.7L2107 882.5M2071 810.8L2145 899.5M2143 843.6L2182 886.8M1852 490.7L1893 531.4M1922 518.7L1966 556.1M1999 545.3L2045 580.4M2085 572.5L2133 606.2M2136 573.3L2182 602.2M2123 746.2L2182 752.0M1590 718.6L2182 779.7M1117 694.4L1708 758.9M643 667.4L1176 728.8M347 658.8L702 702.3M1147 963.6L1261 983.0M989 952.6L1164 983.0M631 921.2L972 983.0M464 906.7L875 983.0M347 900.8L725 972.7M347 935.2L395 944.8" stroke-opacity="0.24"/><path d="M505 725.7L347 799.7M601 713.6L500 764.6M710 692.9L606 748.9M849 651.1L748 709.9M929 639.2L880 670.5M1060 588.6L967 654.3M1125 579.3L1078 616.0M1204 554.4L1160 593.4M1279 526.3L1238 567.8M893 941.5L854 983.0M919 941.5L881 983.0M947 938.5L908 983.0M1350 494.1L1312 538.6M1035 894.1L962 983.0M1059 894.2L990 983.0M1088 887.3L1017 983.0M1167 839.6L1103 935.2M1189 839.6L1129 935.2M1211 839.6L1154 935.2M1444 465.4L1415 517.2M1262 827.8L1235 879.5M1284 827.8L1258 879.5M1305 827.8L1282 879.6M1368 776.2L1329 879.6M1395 757.5L1355 870.2M1414 757.5L1379 870.3M1452 757.6L1438 814.0M1471 757.7L1460 814.0M1490 757.7L1481 814.1M1554 420.0L1547 476.3M1529 757.8L1523 814.1M1548 757.9L1544 814.2M1567 757.9L1565 814.2M1582 420.5L1583 476.8M1605 758.1L1608 814.3M1624 758.1L1629 814.3M1644 758.2L1650 814.4M1611 421.1L1619 477.2M1682 758.3L1693 814.5M1701 758.3L1714 814.5M1720 758.4L1735 814.5M1759 758.5L1796 870.7M1799 814.7L1819 870.8M1805 777.3L1846 880.2M1869 828.8L1893 880.2M1891 828.8L1917 880.2M1912 828.9L1941 880.3M1724 469.4L1754 520.8M1963 840.8L2022 935.6M1985 840.8L2048 935.6M2040 888.3L2073 935.6M2088 888.3L2160 983.0M2107 882.5L2182 976.1M2145 899.5L2182 943.8M1816 494.0L1853 536.0M1893 531.4L1934 572.2M1966 556.1L2009 593.5M2045 580.4L2091 615.5M2133 606.2L2182 639.8M1708 758.9L2182 810.4M1176 728.8L1708 790.2M702 702.3L1117 753.0M347 687.7L643 726.3M725 972.7L779 983.0M395 944.8L586 983.0M347 953.8L489 983.0M347 973.3L393 983.0" stroke-opacity="0.27"/><path d="M500 764.6L398 815.6M606 748.9L554 776.9M748 709.9L648 768.6M880 670.5L782 733.0M967 654.3L920 687.2M1078 616.0L1031 652.7M1160 593.4L1115 632.4M1238 567.8L1197 609.3M1312 538.6L1275 583.0M1381 504.8L1348 552.6M1103 935.2L1071 983.0M1129 935.2L1099 983.0M1154 935.2L1126 983.0M1235 879.5L1180 983.0M1258 879.5L1233 931.3M1282 879.6L1258 931.3M1478 465.9L1457 517.6M1329 879.6L1309 931.3M1355 870.2L1336 926.6M1379 870.3L1361 926.6M1438 814.0L1425 870.3M1460 814.0L1448 870.3M1481 814.1L1471 870.4M1523 814.1L1518 870.4M1544 814.2L1541 870.4M1565 814.2L1564 870.5M1608 814.3L1611 870.5M1629 814.3L1634 870.6M1650 814.4L1657 870.6M1693 814.5L1703 870.6M1714 814.5L1727 870.7M1735 814.5L1764 926.8M1796 870.7L1815 926.9M1819 870.8L1840 926.9M1846 880.2L1867 931.6M1688 468.9L1711 520.3M1893 880.2L1918 931.6M1917 880.2L1970 983.0M1941 880.3L1997 983.0M2022 935.6L2051 983.0M2048 935.6L2079 983.0M2073 935.6L2106 983.0M1788 509.4L1823 556.8M1853 536.0L1889 578.0M1934 572.2L1975 612.9M2009 593.5L2052 630.9M2091 615.5L2136 650.6M1708 790.2L2182 844.7M1117 753.0L1590 810.9M643 726.3L998 772.6M347 720.6L465 737.2" stroke-opacity="0.30"/><path d="M398 815.6L347 841.1M554 776.9L451 832.9M648 768.6L598 798.0M782 733.0L733 764.2M920 687.2L873 720.1M1031 652.7L984 689.4M1115 632.4L1071 671.3M1197 609.3L1156 650.8M1275 583.0L1237 627.4M1348 552.6L1314 600.4M1415 517.2L1386 568.9M1233 931.3L1207 983.0M1258 931.3L1235 983.0M1309 931.3L1289 983.0M1336 926.6L1316 983.0M1361 926.6L1344 983.0M1510 475.8L1495 532.1M1425 870.3L1398 983.0M1448 870.3L1425 983.0M1471 870.4L1452 983.0M1547 476.3L1539 532.6M1518 870.4L1507 983.0M1541 870.4L1534 983.0M1564 870.5L1561 983.0M1583 476.8L1584 533.0M1611 870.5L1616 983.0M1634 870.6L1643 983.0M1657 870.6L1670 983.0M1619 477.2L1628 533.4M1703 870.6L1725 983.0M1727 870.7L1752 983.0M1764 926.8L1779 983.0M1656 477.7L1673 533.9M1815 926.9L1834 983.0M1840 926.9L1861 983.0M1867 931.6L1888 983.0M1918 931.6L1943 983.0M1754 520.8L1784 572.1M1823 556.8L1857 604.1M1889 578.0L1926 620.0M1975 612.9L2017 653.6M2052 630.9L2095 668.3M2136 650.6L2182 685.8M1590 810.9L2064 868.9M998 772.6L1412 826.7M465 737.2L821 786.8" stroke-opacity="0.33"/><path d="M451 832.9L347 889.0M598 798.0L498 856.7M733 764.2L635 826.7M873 720.1L780 785.8M984 689.4L937 726.1M1071 671.3L1027 710.3M1156 650.8L1115 692.4M1457 517.6L1435 569.3M1711 520.3L1734 571.7M1926 620.0L1962 662.0M2017 653.6L2058 694.3M2095 668.3L2139 705.6M2064 868.9L2182 883.3M1412 826.7L1827 880.7M821 786.8L1176 836.4M347 758.6L577 793.1" stroke-opacity="0.36"/><path d="M498 856.7L397 915.4M635 826.7L586 858.0M780 785.8L733 818.7M937 726.1L843 799.5M1027 710.3L983 749.2M1237 627.4L1199 671.9M1314 600.4L1280 648.3M1386 568.9L1357 620.7M1435 569.3L1413 621.0M1495 532.1L1479 588.5M1539 532.6L1532 588.9M1584 533.0L1584 589.3M1628 533.4L1637 589.6M1673 533.9L1689 590.0M1734 571.7L1757 623.1M1784 572.1L1814 623.5M1857 604.1L1892 651.5M2058 694.3L2099 735.1M2139 705.6L2182 743.0M1827 880.7L2182 927.1M1176 836.4L1531 886.0M577 793.1L921 844.9" stroke-opacity="0.39"/><path d="M397 915.4L347 944.8M586 858.0L488 920.5M733 818.7L640 884.4M843 799.5L796 836.2M983 749.2L938 788.2M1115 692.4L1073 733.9M1199 671.9L1161 716.3M1280 648.3L1246 696.1M1357 620.7L1327 672.5M1814 623.5L1844 674.8M1892 651.5L1926 698.8M1962 662.0L1999 704.1M1531 886.0L1886 935.6M921 844.9L1208 888.1M347 802.8L580 840.8" stroke-opacity="0.42"/><path d="M488 920.5L440 951.7M640 884.4L593 917.3M796 836.2L749 872.9M938 788.2L894 827.2M1073 733.9L1032 775.4M1161 716.3L1124 760.8M1413 621.0L1392 672.7M1479 588.5L1464 644.9M1532 588.9L1524 645.2M1584 589.3L1585 645.5M1637 589.6L1645 645.8M1689 590.0L1706 646.2M1757 623.1L1779 674.5M1999 704.1L2036 746.1M2099 735.1L2141 775.8M1886 935.6L2182 977.0M1208 888.1L1495 931.2M580 840.8L813 878.7" stroke-opacity="0.45"/><path d="M440 951.7L391 983.0M593 917.3L546 950.1M749 872.9L702 909.6M894 827.2L850 866.1M1032 775.4L991 816.9M1246 696.1L1213 743.9M1327 672.5L1298 724.2M1844 674.8L1874 726.2M1926 698.8L1961 746.2M2036 746.1L2072 788.1M2141 775.8L2182 816.5M1495 931.2L1782 974.4M813 878.7L1104 926.1M347 855.1L402 864.9" stroke-opacity="0.48"/><path d="M546 950.1L500 983.0M702 909.6L655 946.3M850 866.1L806 905.1M991 816.9L950 858.4M1124 760.8L1086 805.2M1213 743.9L1179 791.7M1392 672.7L1370 724.5M1464 644.9L1448 701.2M1524 645.2L1517 701.5M1645 645.8L1654 702.0M1706 646.2L1723 702.3M1779 674.5L1802 725.9M1961 746.2L1995 793.6M2072 788.1L2109 830.1M1782 974.4L1839 983.0M1104 926.1L1337 964.0M402 864.9L624 904.3" stroke-opacity="0.51"/><path d="M655 946.3L608 983.0M806 905.1L762 944.0M950 858.4L909 900.0M1086 805.2L1048 849.7M1298 724.2L1269 776.0M1585 645.5L1585 701.8M1874 726.2L1904 777.6M2109 830.1L2145 872.1M1337 964.0L1454 983.0M624 904.3L846 943.6" stroke-opacity="0.54"/><path d="M762 944.0L717 983.0M909 900.0L867 941.5M1048 849.7L1011 894.1M1179 791.7L1145 839.5M1370 724.5L1348 776.2M1448 701.2L1433 757.6M1723 702.3L1739 758.4M1802 725.9L1825 777.4M1995 793.6L2030 840.9M846 943.6L1068 983.0" stroke-opacity="0.57"/><path d="M867 941.5L826 983.0M1145 839.5L1112 887.4M1269 776.0L1240 827.7M1517 701.5L1509 757.8M1585 701.8L1586 758.0M1654 702.0L1663 758.2M1904 777.6L1934 828.9M2030 840.9L2064 888.3M2145 872.1L2182 914.1M347 917.6L515 950.3" stroke-opacity="0.60"/><path d="M1011 894.1L935 983.0M1112 887.4L1044 983.0M1240 827.7L1153 983.0M1348 776.2L1262 983.0M1433 757.6L1371 983.0M1509 757.8L1480 983.0M1586 758.0L1589 983.0M1663 758.2L1697 983.0M1739 758.4L1806 983.0M1825 777.4L1915 983.0M1934 828.9L2024 983.0M2064 888.3L2133 983.0M515 950.3L682 983.0" stroke-opacity="0.63"/></g><polygon points="643.8,670.6 654.7,662.5 654.7,659.7 682,654 682,651.5 709.5,648 740,652 786,659 1091,727 1092.8,780.7 1143.6,787 1184.5,791.7 1184.5,789 1143.6,784 1092.8,780.7" fill="url(#gshadow)"/><polygon points="1143.6,787 1184.5,791.7 1184.5,784 1143.6,780" fill="#283658" fill-opacity="0.82"/><polygon points="1231.2,399.7 1252.5,388.0 1254.3,774.0 1232.5,798.8" fill="url(#gside)" /><polygon points="1232.3,754.0 1254.1,727.0 1254.3,774.0 1232.5,798.8" fill="#d6cca9" /><polygon points="1073.5,399.5 1231.2,405.0 1232.5,798.8 1092.8,780.7" fill="url(#gface)" /><polygon points="1131.0,409.9 1177.8,411.7 1185.4,792.7 1143.2,787.2" fill="url(#grecess)" /><polygon points="1125.5,409.7 1131.0,409.9 1143.2,787.2 1138.3,786.6" fill="url(#gstrip)" /><polygon points="1090.5,731.8 1136.7,737.2 1138.3,786.6 1092.8,780.7" fill="#b6ab8b" /><polygon points="1136.7,739.4 1141.7,740.0 1143.2,787.2 1138.3,786.6" fill="#d2c9a8" /><polygon points="1141.8,743.6 1184.5,748.7 1185.4,789.8 1143.1,784.4" fill="#857f6c" /><polygon points="1184.6,753.1 1232.2,758.7 1232.5,798.8 1185.4,792.7" fill="#b6ab8b" /><polygon points="1078.2,412.5 1098.8,413.4 1099.4,429.1 1078.9,428.2" fill="#b9bdc6" /><polygon points="1078.9,428.2 1099.6,429.1 1099.7,431.8 1079.0,430.9" fill="#b8b9bd" /><polygon points="1079.0,430.9 1099.7,431.8 1099.7,433.4 1079.1,432.4" fill="#6e727b" /><polygon points="1079.1,413.7 1088.3,414.1 1088.8,426.3 1079.7,425.9" fill="#6b727d" /><polygon points="1088.9,414.1 1098.0,414.5 1098.5,426.7 1089.4,426.3" fill="#575d66" /><polygon points="1104.9,413.6 1125.5,414.4 1126.1,430.2 1105.6,429.3" fill="#b9bdc6" /><polygon points="1105.6,429.3 1126.2,430.2 1126.3,433.0 1105.7,432.1" fill="#b8b9bd" /><polygon points="1105.7,432.1 1126.3,433.0 1126.4,434.6 1105.7,433.6" fill="#6e727b" /><polygon points="1105.9,414.8 1115.1,415.2 1115.5,427.4 1106.4,427.0" fill="#403a38" /><polygon points="1115.7,415.2 1124.8,415.6 1125.2,427.8 1116.1,427.4" fill="#534d4b" /><polygon points="1135.6,414.8 1176.9,416.5 1177.3,432.5 1136.1,430.7" fill="#8b96aa" /><polygon points="1136.1,430.7 1177.4,432.5 1177.5,435.3 1136.2,433.4" fill="#8a93a4" /><polygon points="1136.2,433.4 1177.5,435.3 1177.5,436.9 1136.2,435.0" fill="#566074" /><polygon points="1136.6,416.1 1146.0,416.4 1146.4,428.7 1136.9,428.3" fill="#353435" /><polygon points="1146.6,416.5 1156.1,416.9 1156.4,429.2 1147.0,428.8" fill="#2b2a2b" /><polygon points="1156.7,416.9 1166.1,417.3 1166.4,429.6 1157.0,429.2" fill="#353435" /><polygon points="1166.7,417.3 1176.2,417.7 1176.4,430.0 1167.0,429.6" fill="#2b2a2b" /><polygon points="1178.0,416.6 1199.2,417.4 1199.5,433.4 1178.3,432.5" fill="#b9bdc6" /><polygon points="1178.3,432.5 1199.6,433.4 1199.7,436.2 1178.4,435.3" fill="#b8b9bd" /><polygon points="1178.4,435.3 1199.7,436.2 1199.7,437.8 1178.4,436.9" fill="#6e727b" /><polygon points="1179.0,417.8 1188.4,418.2 1188.6,430.6 1179.2,430.2" fill="#403a36" /><polygon points="1189.0,418.2 1198.5,418.6 1198.7,431.0 1189.2,430.6" fill="#534d4a" /><polygon points="1205.9,417.7 1227.6,418.6 1227.7,434.7 1206.1,433.7" fill="#b9bdc6" /><polygon points="1206.1,433.7 1227.8,434.7 1227.8,437.5 1206.1,436.5" fill="#b8b9bd" /><polygon points="1206.1,436.5 1227.8,437.5 1227.9,439.1 1206.1,438.1" fill="#6e727b" /><polygon points="1206.8,418.9 1216.5,419.3 1216.6,431.8 1207.0,431.4" fill="#8b8e95" /><polygon points="1217.1,419.3 1226.8,419.7 1226.9,432.2 1217.2,431.8" fill="#71747a" /><polygon points="1079.3,436.9 1099.8,437.9 1100.4,453.5 1080.0,452.5" fill="#b9bdc6" /><polygon points="1080.0,452.5 1100.6,453.5 1100.7,456.2 1080.2,455.2" fill="#b8b9bd" /><polygon points="1080.2,455.2 1100.7,456.2 1100.7,457.8 1080.2,456.7" fill="#6e727b" /><polygon points="1080.3,438.1 1089.4,438.6 1089.9,450.6 1080.9,450.2" fill="#565557" /><polygon points="1090.0,438.6 1099.0,439.0 1099.5,451.1 1090.5,450.7" fill="#666667" /><polygon points="1105.9,438.1 1126.4,439.1 1126.9,454.8 1106.5,453.8" fill="#b9bdc6" /><polygon points="1106.5,453.8 1127.1,454.8 1127.2,457.5 1106.6,456.5" fill="#b8b9bd" /><polygon points="1106.6,456.5 1127.2,457.5 1127.2,459.1 1106.7,458.1" fill="#6e727b" /><polygon points="1106.9,439.4 1116.0,439.8 1116.4,451.9 1107.4,451.5" fill="#856b51" /><polygon points="1116.6,439.8 1125.6,440.2 1126.1,452.4 1117.0,452.0" fill="#6d5742" /><polygon points="1136.4,439.5 1177.4,441.4 1177.8,457.3 1136.9,455.3" fill="#8b96aa" /><polygon points="1136.9,455.3 1177.9,457.3 1178.0,460.1 1137.0,458.0" fill="#8a93a4" /><polygon points="1137.0,458.0 1178.0,460.1 1178.0,461.6 1137.0,459.6" fill="#566074" /><polygon points="1137.3,440.8 1146.7,441.2 1147.1,453.4 1137.7,453.0" fill="#7a6551" /><polygon points="1147.3,441.2 1156.7,441.7 1157.0,453.9 1147.7,453.4" fill="#877462" /><polygon points="1157.3,441.7 1166.7,442.1 1167.0,454.4 1157.6,453.9" fill="#7a6551" /><polygon points="1167.3,442.1 1176.7,442.6 1176.9,454.9 1167.6,454.4" fill="#877462" /><polygon points="1178.5,441.5 1199.6,442.4 1199.8,458.4 1178.8,457.3" fill="#b9bdc6" /><polygon points="1178.8,457.3 1200.0,458.4 1200.0,461.2 1178.9,460.1" fill="#b8b9bd" /><polygon points="1178.9,460.1 1200.0,461.2 1200.0,462.7 1178.9,461.7" fill="#6e727b" /><polygon points="1179.5,442.7 1188.8,443.1 1189.1,455.5 1179.7,455.0" fill="#856c54" /><polygon points="1189.5,443.2 1198.8,443.6 1199.0,455.9 1189.7,455.5" fill="#6d5844" /><polygon points="1206.2,442.7 1227.7,443.7 1227.8,459.7 1206.4,458.7" fill="#b9bdc6" /><polygon points="1206.4,458.7 1228.0,459.8 1228.0,462.6 1206.4,461.5" fill="#b8b9bd" /><polygon points="1206.4,461.5 1228.0,462.6 1228.0,464.1 1206.5,463.1" fill="#6e727b" /><polygon points="1207.1,444.0 1216.7,444.4 1216.9,456.8 1207.3,456.3" fill="#363738" /><polygon points="1217.4,444.4 1227.0,444.9 1227.1,457.3 1217.5,456.8" fill="#4a4b4b" /><polygon points="1080.4,461.2 1100.8,462.2 1101.4,477.7 1081.2,476.6" fill="#b9bdc6" /><polygon points="1081.2,476.6 1101.6,477.8 1101.7,480.5 1081.3,479.3" fill="#b8b9bd" /><polygon points="1081.3,479.3 1101.7,480.5 1101.7,482.0 1081.4,480.9" fill="#6e727b" /><polygon points="1081.4,462.4 1090.4,462.9 1091.0,474.9 1082.0,474.4" fill="#40454c" /><polygon points="1091.0,462.9 1100.1,463.4 1100.6,475.4 1091.6,474.9" fill="#34383e" /><polygon points="1106.9,462.5 1127.2,463.6 1127.7,479.2 1107.5,478.1" fill="#b9bdc6" /><polygon points="1107.5,478.1 1127.9,479.2 1128.0,481.9 1107.6,480.8" fill="#b8b9bd" /><polygon points="1107.6,480.8 1128.0,481.9 1128.0,483.5 1107.7,482.3" fill="#6e727b" /><polygon points="1107.8,463.8 1116.9,464.2 1117.3,476.3 1108.3,475.8" fill="#353657" /><polygon points="1117.5,464.3 1126.5,464.7 1126.9,476.8 1117.9,476.3" fill="#494a67" /><polygon points="1137.1,464.1 1177.9,466.2 1178.3,481.9 1137.6,479.7" fill="#8b96aa" /><polygon points="1137.6,479.7 1178.4,482.0 1178.5,484.7 1137.7,482.5" fill="#8a93a4" /><polygon points="1137.7,482.5 1178.5,484.7 1178.5,486.3 1137.8,484.0" fill="#566074" /><polygon points="1138.1,465.3 1147.4,465.8 1147.8,477.9 1138.5,477.4" fill="#2a2b47" /><polygon points="1148.0,465.8 1157.3,466.3 1157.7,478.5 1148.4,478.0" fill="#22233a" /><polygon points="1158.0,466.3 1167.3,466.8 1167.6,479.0 1158.3,478.5" fill="#2a2b47" /><polygon points="1167.9,466.8 1177.2,467.3 1177.5,479.5 1168.2,479.0" fill="#22233a" /><polygon points="1179.0,466.2 1199.9,467.3 1200.2,483.1 1179.3,482.0" fill="#b9bdc6" /><polygon points="1179.3,482.0 1200.3,483.1 1200.4,485.9 1179.4,484.8" fill="#b8b9bd" /><polygon points="1179.4,484.8 1200.4,485.9 1200.4,487.5 1179.4,486.3" fill="#6e727b" /><polygon points="1180.0,467.5 1189.3,467.9 1189.5,480.2 1180.2,479.7" fill="#35364d" /><polygon points="1189.9,468.0 1199.2,468.5 1199.4,480.7 1190.1,480.2" fill="#494a5e" /><polygon points="1206.5,467.6 1227.9,468.7 1228.0,484.7 1206.7,483.5" fill="#b9bdc6" /><polygon points="1206.7,483.5 1228.2,484.7 1228.2,487.5 1206.8,486.3" fill="#b8b9bd" /><polygon points="1206.8,486.3 1228.2,487.5 1228.2,489.0 1206.8,487.8" fill="#6e727b" /><polygon points="1207.5,468.9 1217.0,469.4 1217.1,481.7 1207.6,481.2" fill="#1f6178" /><polygon points="1217.6,469.4 1227.2,469.9 1227.2,482.2 1217.7,481.7" fill="#194f62" /><polygon points="1081.6,485.3 1101.8,486.4 1102.4,501.9 1082.3,500.7" fill="#b9bdc6" /><polygon points="1082.3,500.7 1102.6,501.9 1102.7,504.6 1082.4,503.3" fill="#b8b9bd" /><polygon points="1082.4,503.3 1102.7,504.6 1102.7,506.1 1082.5,504.9" fill="#6e727b" /><polygon points="1082.5,486.5 1091.5,487.0 1092.0,498.9 1083.1,498.4" fill="#90959e" /><polygon points="1092.1,487.1 1101.1,487.6 1101.6,499.5 1092.6,499.0" fill="#9b9fa7" /><polygon points="1107.8,486.8 1128.0,487.9 1128.6,503.4 1108.5,502.2" fill="#b9bdc6" /><polygon points="1108.5,502.2 1128.7,503.4 1128.8,506.2 1108.6,504.9" fill="#b8b9bd" /><polygon points="1108.6,504.9 1128.8,506.2 1128.9,507.7 1108.6,506.5" fill="#6e727b" /><polygon points="1108.8,488.0 1117.8,488.5 1118.2,500.5 1109.3,500.0" fill="#18191e" /><polygon points="1118.4,488.5 1127.3,489.1 1127.7,501.1 1118.8,500.5" fill="#131418" /><polygon points="1137.9,488.5 1178.4,490.8 1178.8,506.5 1138.4,504.0" fill="#8b96aa" /><polygon points="1138.4,504.0 1178.9,506.5 1179.0,509.2 1138.5,506.7" fill="#8a93a4" /><polygon points="1138.5,506.7 1179.0,509.2 1179.0,510.8 1138.5,508.3" fill="#566074" /><polygon points="1138.9,489.7 1148.1,490.2 1148.5,502.3 1139.2,501.8" fill="#18191e" /><polygon points="1148.7,490.3 1158.0,490.8 1158.3,502.9 1149.1,502.3" fill="#2f3034" /><polygon points="1158.6,490.8 1167.8,491.4 1168.1,503.5 1158.9,502.9" fill="#18191e" /><polygon points="1168.5,491.4 1177.7,491.9 1178.0,504.1 1168.7,503.5" fill="#2f3034" /><polygon points="1179.5,490.8 1200.3,492.0 1200.5,507.8 1179.8,506.5" fill="#b9bdc6" /><polygon points="1179.8,506.5 1200.7,507.8 1200.7,510.5 1179.9,509.3" fill="#b8b9bd" /><polygon points="1179.9,509.3 1200.7,510.5 1200.7,512.1 1179.9,510.8" fill="#6e727b" /><polygon points="1180.4,492.1 1189.7,492.6 1189.9,504.8 1180.7,504.2" fill="#18191e" /><polygon points="1190.3,492.6 1199.6,493.2 1199.7,505.4 1190.5,504.8" fill="#131418" /><polygon points="1206.8,492.4 1228.1,493.6 1228.2,509.4 1207.0,508.2" fill="#b9bdc6" /><polygon points="1207.0,508.2 1228.4,509.4 1228.4,512.2 1207.1,510.9" fill="#b8b9bd" /><polygon points="1207.1,510.9 1228.4,512.2 1228.4,513.8 1207.1,512.5" fill="#6e727b" /><polygon points="1207.8,493.6 1217.2,494.2 1217.4,506.4 1207.9,505.8" fill="#354b67" /><polygon points="1217.9,494.2 1227.3,494.7 1227.4,507.0 1218.0,506.4" fill="#495d76" /><polygon points="1082.7,509.3 1102.8,510.5 1103.4,525.8 1083.4,524.5" fill="#b9bdc6" /><polygon points="1083.4,524.5 1103.5,525.8 1103.7,528.5 1083.5,527.2" fill="#b8b9bd" /><polygon points="1083.5,527.2 1103.7,528.5 1103.7,530.1 1083.6,528.7" fill="#6e727b" /><polygon points="1083.7,510.5 1092.6,511.0 1093.1,522.9 1084.2,522.3" fill="#404247" /><polygon points="1093.2,511.1 1102.1,511.6 1102.6,523.5 1093.7,522.9" fill="#34363a" /><polygon points="1108.8,510.9 1128.9,512.1 1129.4,527.5 1109.4,526.2" fill="#b9bdc6" /><polygon points="1109.4,526.2 1129.5,527.6 1129.6,530.2 1109.5,528.9" fill="#b8b9bd" /><polygon points="1109.5,528.9 1129.6,530.2 1129.7,531.8 1109.6,530.4" fill="#6e727b" /><polygon points="1109.8,512.1 1118.6,512.7 1119.1,524.6 1110.2,524.0" fill="#56505c" /><polygon points="1119.3,512.7 1128.1,513.2 1128.6,525.2 1119.7,524.6" fill="#66616c" /><polygon points="1138.7,512.7 1178.9,515.2 1179.3,530.8 1139.2,528.2" fill="#8b96aa" /><polygon points="1139.2,528.2 1179.4,530.8 1179.5,533.5 1139.2,530.9" fill="#8a93a4" /><polygon points="1139.2,530.9 1179.5,533.5 1179.5,535.1 1139.3,532.4" fill="#566074" /><polygon points="1139.6,514.0 1148.8,514.5 1149.1,526.5 1140.0,525.9" fill="#4b4757" /><polygon points="1149.4,514.6 1158.6,515.1 1158.9,527.2 1149.7,526.6" fill="#3d3a47" /><polygon points="1159.2,515.2 1168.4,515.8 1168.7,527.8 1159.5,527.2" fill="#4b4757" /><polygon points="1169.0,515.8 1178.2,516.4 1178.5,528.4 1169.3,527.8" fill="#3d3a47" /><polygon points="1180.0,515.3 1200.7,516.6 1200.9,532.2 1180.3,530.9" fill="#b9bdc6" /><polygon points="1180.3,530.9 1201.0,532.2 1201.1,535.0 1180.4,533.6" fill="#b8b9bd" /><polygon points="1180.4,533.6 1201.1,535.0 1201.1,536.5 1180.4,535.2" fill="#6e727b" /><polygon points="1180.9,516.5 1190.1,517.1 1190.3,529.2 1181.2,528.6" fill="#565062" /><polygon points="1190.7,517.1 1199.9,517.7 1200.1,529.8 1190.9,529.2" fill="#666171" /><polygon points="1207.1,517.0 1228.3,518.3 1228.4,534.0 1207.3,532.7" fill="#b9bdc6" /><polygon points="1207.3,532.7 1228.5,534.0 1228.5,536.8 1207.4,535.4" fill="#b8b9bd" /><polygon points="1207.4,535.4 1228.5,536.8 1228.6,538.4 1207.4,537.0" fill="#6e727b" /><polygon points="1208.1,518.2 1217.5,518.8 1217.6,531.0 1208.2,530.4" fill="#6b4b51" /><polygon points="1218.1,518.8 1227.5,519.4 1227.6,531.6 1218.2,531.0" fill="#573d42" /><polygon points="1083.8,533.1 1103.8,534.4 1104.4,549.7 1084.5,548.2" fill="#b9bdc6" /><polygon points="1084.5,548.2 1104.5,549.7 1104.6,552.3 1084.7,550.9" fill="#b8b9bd" /><polygon points="1084.7,550.9 1104.6,552.3 1104.7,553.8 1084.7,552.4" fill="#6e727b" /><polygon points="1084.8,534.3 1093.6,534.9 1094.1,546.7 1085.3,546.0" fill="#6b6d75" /><polygon points="1094.2,534.9 1103.1,535.5 1103.5,547.3 1094.7,546.7" fill="#797b82" /><polygon points="1109.7,534.8 1129.7,536.2 1130.2,551.5 1110.4,550.1" fill="#b9bdc6" /><polygon points="1110.4,550.1 1130.4,551.5 1130.4,554.2 1110.5,552.7" fill="#b8b9bd" /><polygon points="1110.5,552.7 1130.4,554.2 1130.5,555.7 1110.5,554.3" fill="#6e727b" /><polygon points="1110.7,536.0 1119.5,536.6 1120.0,548.5 1111.2,547.9" fill="#2a3647" /><polygon points="1120.1,536.7 1129.0,537.3 1129.4,549.2 1120.6,548.5" fill="#222c3a" /><polygon points="1139.4,536.8 1179.4,539.5 1179.8,555.0 1139.9,552.2" fill="#8b96aa" /><polygon points="1139.9,552.2 1179.9,555.0 1180.0,557.7 1140.0,554.9" fill="#8a93a4" /><polygon points="1140.0,554.9 1180.0,557.7 1180.0,559.3 1140.0,556.4" fill="#566074" /><polygon points="1140.4,538.1 1149.5,538.7 1149.8,550.6 1140.7,550.0" fill="#1f2b3c" /><polygon points="1150.1,538.7 1159.2,539.3 1159.5,551.3 1150.4,550.6" fill="#35404f" /><polygon points="1159.8,539.4 1169.0,540.0 1169.2,552.0 1160.1,551.3" fill="#1f2b3c" /><polygon points="1169.6,540.0 1178.7,540.7 1179.0,552.7 1169.8,552.0" fill="#35404f" /><polygon points="1180.5,539.6 1201.0,541.0 1201.2,556.6 1180.8,555.1" fill="#b9bdc6" /><polygon points="1180.8,555.1 1201.4,556.6 1201.4,559.3 1180.8,557.8" fill="#b8b9bd" /><polygon points="1180.8,557.8 1201.4,559.3 1201.5,560.8 1180.9,559.3" fill="#6e727b" /><polygon points="1181.4,540.8 1190.5,541.5 1190.8,553.5 1181.6,552.8" fill="#2a364c" /><polygon points="1191.1,541.5 1200.3,542.1 1200.5,554.2 1191.4,553.5" fill="#222c3e" /><polygon points="1207.5,541.4 1228.4,542.9 1228.6,558.5 1207.7,557.0" fill="#b9bdc6" /><polygon points="1207.7,557.0 1228.7,558.5 1228.7,561.2 1207.7,559.7" fill="#b8b9bd" /><polygon points="1207.7,559.7 1228.7,561.2 1228.7,562.8 1207.7,561.3" fill="#6e727b" /><polygon points="1208.4,542.7 1217.7,543.3 1217.9,555.4 1208.5,554.7" fill="#2a2b31" /><polygon points="1218.3,543.3 1227.7,544.0 1227.8,556.1 1218.5,555.4" fill="#3f4045" /><polygon points="1084.9,556.8 1104.7,558.2 1105.4,573.3 1085.6,571.8" fill="#b9bdc6" /><polygon points="1085.6,571.8 1105.5,573.3 1105.6,576.0 1085.8,574.5" fill="#b8b9bd" /><polygon points="1085.8,574.5 1105.6,576.0 1105.7,577.5 1085.8,576.0" fill="#6e727b" /><polygon points="1085.9,558.0 1094.7,558.6 1095.2,570.3 1086.4,569.6" fill="#4b4b51" /><polygon points="1095.3,558.6 1104.0,559.3 1104.5,571.0 1095.8,570.3" fill="#3d3d42" /><polygon points="1110.7,558.6 1130.5,560.1 1131.0,575.3 1111.3,573.8" fill="#b9bdc6" /><polygon points="1111.3,573.8 1131.2,575.3 1131.3,578.0 1111.4,576.4" fill="#b8b9bd" /><polygon points="1111.4,576.4 1131.3,578.0 1131.3,579.5 1111.5,577.9" fill="#6e727b" /><polygon points="1111.6,559.8 1120.4,560.5 1120.8,572.3 1112.1,571.6" fill="#614141" /><polygon points="1121.0,560.5 1129.8,561.2 1130.2,573.0 1121.4,572.3" fill="#705454" /><polygon points="1140.2,560.8 1179.9,563.7 1180.2,579.1 1140.6,576.0" fill="#8b96aa" /><polygon points="1140.6,576.0 1180.4,579.1 1180.4,581.8 1140.7,578.7" fill="#8a93a4" /><polygon points="1140.7,578.7 1180.4,581.8 1180.5,583.3 1140.8,580.2" fill="#566074" /><polygon points="1141.1,562.0 1150.2,562.7 1150.5,574.5 1141.5,573.8" fill="#4b3a41" /><polygon points="1150.8,562.7 1159.9,563.4 1160.2,575.3 1151.1,574.6" fill="#3d2f35" /><polygon points="1160.5,563.4 1169.5,564.1 1169.8,576.0 1160.8,575.3" fill="#4b3a41" /><polygon points="1170.1,564.1 1179.2,564.8 1179.5,576.7 1170.4,576.0" fill="#3d2f35" /><polygon points="1181.0,563.8 1201.4,565.3 1201.6,580.7 1181.3,579.2" fill="#b9bdc6" /><polygon points="1181.3,579.2 1201.7,580.7 1201.8,583.4 1181.3,581.8" fill="#b8b9bd" /><polygon points="1181.3,581.8 1201.8,583.4 1201.8,585.0 1181.4,583.4" fill="#6e727b" /><polygon points="1181.9,565.0 1191.0,565.7 1191.2,577.6 1182.1,576.9" fill="#614141" /><polygon points="1191.6,565.7 1200.6,566.4 1200.8,578.3 1191.8,577.7" fill="#705454" /><polygon points="1207.8,565.7 1228.6,567.3 1228.7,582.8 1208.0,581.2" fill="#b9bdc6" /><polygon points="1208.0,581.2 1228.9,582.8 1228.9,585.5 1208.0,583.9" fill="#b8b9bd" /><polygon points="1208.0,583.9 1228.9,585.5 1228.9,587.1 1208.0,585.4" fill="#6e727b" /><polygon points="1208.7,567.0 1218.0,567.6 1218.1,579.7 1208.8,579.0" fill="#2a2b2e" /><polygon points="1218.6,567.7 1227.9,568.4 1228.0,580.4 1218.7,579.7" fill="#222325" /><polygon points="1086.0,580.3 1105.7,581.8 1106.3,596.9 1086.7,595.2" fill="#b9bdc6" /><polygon points="1086.7,595.2 1106.5,596.9 1106.6,599.5 1086.9,597.9" fill="#b8b9bd" /><polygon points="1086.9,597.9 1106.6,599.5 1106.6,601.0 1086.9,599.4" fill="#6e727b" /><polygon points="1087.0,581.5 1095.7,582.2 1096.2,593.8 1087.5,593.1" fill="#56585f" /><polygon points="1096.3,582.2 1105.0,582.9 1105.5,594.5 1096.8,593.8" fill="#66686f" /><polygon points="1111.6,582.3 1131.3,583.8 1131.8,599.0 1112.2,597.3" fill="#b9bdc6" /><polygon points="1112.2,597.3 1132.0,599.0 1132.1,601.6 1112.3,600.0" fill="#b8b9bd" /><polygon points="1112.3,600.0 1132.1,601.6 1132.1,603.1 1112.4,601.5" fill="#6e727b" /><polygon points="1112.6,583.5 1121.3,584.2 1121.7,595.9 1113.0,595.2" fill="#2a2c34" /><polygon points="1121.9,584.2 1130.6,584.9 1131.0,596.6 1122.3,595.9" fill="#22242a" /><polygon points="1140.9,584.6 1180.4,587.7 1180.7,603.0 1141.4,599.7" fill="#8b96aa" /><polygon points="1141.4,599.7 1180.9,603.0 1180.9,605.7 1141.5,602.4" fill="#8a93a4" /><polygon points="1141.5,602.4 1180.9,605.7 1181.0,607.2 1141.5,603.9" fill="#566074" /><polygon points="1141.8,585.8 1150.9,586.5 1151.2,598.3 1142.2,597.6" fill="#353741" /><polygon points="1151.5,586.6 1160.5,587.3 1160.8,599.1 1151.8,598.3" fill="#494b54" /><polygon points="1161.1,587.3 1170.1,588.0 1170.4,599.9 1161.4,599.1" fill="#353741" /><polygon points="1170.7,588.1 1179.7,588.8 1179.9,600.6 1171.0,599.9" fill="#494b54" /><polygon points="1181.5,587.8 1201.7,589.4 1201.9,604.7 1181.8,603.1" fill="#b9bdc6" /><polygon points="1181.8,603.1 1202.1,604.7 1202.1,607.4 1181.8,605.7" fill="#b8b9bd" /><polygon points="1181.8,605.7 1202.1,607.4 1202.1,609.0 1181.8,607.3" fill="#6e727b" /><polygon points="1182.4,589.0 1191.4,589.7 1191.6,601.6 1182.6,600.9" fill="#1f2126" /><polygon points="1192.0,589.8 1201.0,590.5 1201.2,602.4 1192.2,601.6" fill="#191b1f" /><polygon points="1208.1,589.9 1228.8,591.5 1228.9,607.0 1208.3,605.3" fill="#b9bdc6" /><polygon points="1208.3,605.3 1229.0,607.0 1229.1,609.7 1208.3,607.9" fill="#b8b9bd" /><polygon points="1208.3,607.9 1229.1,609.7 1229.1,611.2 1208.3,609.5" fill="#6e727b" /><polygon points="1209.0,591.1 1218.2,591.8 1218.3,603.8 1209.1,603.0" fill="#1f2125" /><polygon points="1218.8,591.9 1228.1,592.6 1228.1,604.6 1218.9,603.8" fill="#35373a" /><polygon points="1087.1,603.6 1106.7,605.3 1107.3,620.2 1087.8,618.5" fill="#b9bdc6" /><polygon points="1087.8,618.5 1107.4,620.3 1107.6,622.9 1088.0,621.1" fill="#b8b9bd" /><polygon points="1088.0,621.1 1107.6,622.9 1107.6,624.4 1088.0,622.6" fill="#6e727b" /><polygon points="1088.1,604.8 1096.7,605.6 1097.2,617.1 1088.6,616.4" fill="#a8b1c4" /><polygon points="1097.3,605.6 1106.0,606.4 1106.5,617.9 1097.8,617.2" fill="#8991a0" /><polygon points="1112.6,605.8 1132.1,607.4 1132.6,622.5 1113.2,620.8" fill="#b9bdc6" /><polygon points="1113.2,620.8 1132.8,622.5 1132.9,625.1 1113.3,623.4" fill="#b8b9bd" /><polygon points="1113.3,623.4 1132.9,625.1 1132.9,626.6 1113.3,624.9" fill="#6e727b" /><polygon points="1113.5,607.0 1122.2,607.7 1122.6,619.3 1113.9,618.6" fill="#bbbeca" /><polygon points="1122.7,607.8 1131.4,608.5 1131.8,620.2 1123.2,619.4" fill="#c1c4cf" /><polygon points="1141.7,608.2 1180.9,611.6 1181.2,626.7 1142.1,623.3" fill="#8b96aa" /><polygon points="1142.1,623.3 1181.4,626.8 1181.4,629.4 1142.2,625.9" fill="#8a93a4" /><polygon points="1142.2,625.9 1181.4,629.4 1181.4,630.9 1142.3,627.4" fill="#566074" /><polygon points="1142.6,609.5 1151.5,610.2 1151.9,621.9 1142.9,621.1" fill="#95a7c3" /><polygon points="1152.1,610.3 1161.1,611.0 1161.4,622.7 1152.5,622.0" fill="#7a889f" /><polygon points="1161.7,611.1 1170.6,611.8 1170.9,623.6 1162.0,622.8" fill="#95a7c3" /><polygon points="1171.2,611.9 1180.2,612.6 1180.4,624.4 1171.5,623.6" fill="#7a889f" /><polygon points="1181.9,611.6 1202.1,613.3 1202.3,628.6 1182.2,626.8" fill="#b9bdc6" /><polygon points="1182.2,626.8 1202.4,628.6 1202.5,631.3 1182.3,629.5" fill="#b8b9bd" /><polygon points="1182.3,629.5 1202.5,631.3 1202.5,632.8 1182.3,631.0" fill="#6e727b" /><polygon points="1182.8,612.9 1191.8,613.6 1192.0,625.4 1183.1,624.6" fill="#c2c7d4" /><polygon points="1192.4,613.7 1201.3,614.4 1201.5,626.2 1192.6,625.5" fill="#c8ccd8" /><polygon points="1208.4,613.9 1229.0,615.6 1229.1,631.0 1208.6,629.1" fill="#b9bdc6" /><polygon points="1208.6,629.1 1229.2,631.0 1229.2,633.6 1208.6,631.8" fill="#b8b9bd" /><polygon points="1208.6,631.8 1229.2,633.6 1229.2,635.2 1208.6,633.3" fill="#6e727b" /><polygon points="1209.3,615.1 1218.5,615.9 1218.6,627.7 1209.4,626.9" fill="#aeb4c4" /><polygon points="1219.1,615.9 1228.2,616.7 1228.3,628.6 1219.2,627.8" fill="#8e93a0" /><polygon points="1088.2,626.9 1107.6,628.6 1108.3,643.5 1088.9,641.7" fill="#b9bdc6" /><polygon points="1088.9,641.7 1108.4,643.5 1108.5,646.1 1089.0,644.2" fill="#b8b9bd" /><polygon points="1089.0,644.2 1108.5,646.1 1108.6,647.6 1089.1,645.7" fill="#6e727b" /><polygon points="1089.1,628.1 1097.8,628.8 1098.3,640.3 1089.7,639.5" fill="#7d8497" /><polygon points="1098.3,628.9 1107.0,629.7 1107.4,641.2 1098.9,640.4" fill="#8a90a1" /><polygon points="1113.5,629.1 1132.9,630.9 1133.4,645.8 1114.1,644.0" fill="#b9bdc6" /><polygon points="1114.1,644.0 1133.6,645.8 1133.6,648.4 1114.2,646.6" fill="#b8b9bd" /><polygon points="1114.2,646.6 1133.6,648.4 1133.7,649.9 1114.2,648.1" fill="#6e727b" /><polygon points="1114.4,630.3 1123.0,631.1 1123.4,642.7 1114.9,641.9" fill="#bbc1d0" /><polygon points="1123.6,631.2 1132.2,631.9 1132.6,643.5 1124.0,642.7" fill="#999eaa" /><polygon points="1142.4,631.7 1181.4,635.3 1181.7,650.3 1142.9,646.7" fill="#8b96aa" /><polygon points="1142.9,646.7 1181.8,650.4 1181.9,653.0 1142.9,649.3" fill="#8a93a4" /><polygon points="1142.9,649.3 1181.9,653.0 1181.9,654.5 1143.0,650.8" fill="#566074" /><polygon points="1143.3,632.9 1152.2,633.8 1152.5,645.4 1143.7,644.5" fill="#99abc8" /><polygon points="1152.8,633.8 1161.7,634.6 1162.0,646.3 1153.1,645.4" fill="#a3b3cd" /><polygon points="1162.3,634.7 1171.2,635.5 1171.5,647.1 1162.6,646.3" fill="#99abc8" /><polygon points="1171.8,635.5 1180.7,636.3 1180.9,648.0 1172.0,647.2" fill="#a3b3cd" /><polygon points="1182.4,635.3 1202.4,637.1 1202.6,652.3 1182.7,650.4" fill="#b9bdc6" /><polygon points="1182.7,650.4 1202.8,652.3 1202.8,655.0 1182.8,653.1" fill="#b8b9bd" /><polygon points="1182.8,653.1 1202.8,655.0 1202.8,656.5 1182.8,654.6" fill="#6e727b" /><polygon points="1183.3,636.6 1192.2,637.4 1192.4,649.1 1183.5,648.3" fill="#c2c7d4" /><polygon points="1192.8,637.4 1201.7,638.2 1201.9,650.0 1193.0,649.1" fill="#9fa3ad" /><polygon points="1208.7,637.7 1229.1,639.6 1229.2,654.8 1208.9,652.9" fill="#b9bdc6" /><polygon points="1208.9,652.9 1229.4,654.8 1229.4,657.5 1208.9,655.5" fill="#b8b9bd" /><polygon points="1208.9,655.5 1229.4,657.5 1229.4,659.0 1208.9,657.1" fill="#6e727b" /><polygon points="1209.6,638.9 1218.7,639.8 1218.8,651.5 1209.7,650.7" fill="#b5baca" /><polygon points="1219.3,639.8 1228.4,640.6 1228.5,652.4 1219.4,651.6" fill="#bcc0cf" /><polygon points="1089.3,649.9 1108.6,651.8 1109.2,666.5 1090.0,664.6" fill="#b9bdc6" /><polygon points="1090.0,664.6 1109.4,666.6 1109.5,669.1 1090.1,667.2" fill="#b8b9bd" /><polygon points="1090.1,667.2 1109.5,669.1 1109.5,670.6 1090.2,668.7" fill="#6e727b" /><polygon points="1090.2,651.1 1098.8,652.0 1099.3,663.4 1090.8,662.5" fill="#565a6a" /><polygon points="1099.4,652.0 1107.9,652.8 1108.4,664.3 1099.9,663.4" fill="#464956" /><polygon points="1114.4,652.3 1133.7,654.2 1134.2,669.0 1115.0,667.1" fill="#b9bdc6" /><polygon points="1115.0,667.1 1134.3,669.0 1134.4,671.6 1115.1,669.7" fill="#b8b9bd" /><polygon points="1115.1,669.7 1134.4,671.6 1134.5,673.1 1115.1,671.2" fill="#6e727b" /><polygon points="1115.3,653.5 1123.9,654.4 1124.3,665.8 1115.8,665.0" fill="#bbc1d0" /><polygon points="1124.5,654.4 1133.0,655.2 1133.4,666.7 1124.9,665.9" fill="#c1c7d4" /><polygon points="1143.1,655.1 1181.9,658.8 1182.2,673.8 1143.6,670.0" fill="#8b96aa" /><polygon points="1143.6,670.0 1182.3,673.8 1182.4,676.4 1143.7,672.6" fill="#8a93a4" /><polygon points="1143.7,672.6 1182.4,676.4 1182.4,677.9 1143.7,674.0" fill="#566074" /><polygon points="1144.0,656.3 1152.9,657.1 1153.2,668.7 1144.4,667.8" fill="#99abc8" /><polygon points="1153.5,657.2 1162.3,658.1 1162.6,669.6 1153.8,668.8" fill="#7d8ca4" /><polygon points="1162.9,658.1 1171.7,659.0 1172.0,670.6 1163.2,669.7" fill="#99abc8" /><polygon points="1172.3,659.0 1181.2,659.9 1181.4,671.5 1172.6,670.6" fill="#7d8ca4" /><polygon points="1182.9,658.9 1202.8,660.8 1203.0,675.9 1183.2,673.9" fill="#b9bdc6" /><polygon points="1183.2,673.9 1203.1,675.9 1203.2,678.5 1183.2,676.5" fill="#b8b9bd" /><polygon points="1183.2,676.5 1203.2,678.5 1203.2,680.0 1183.3,678.0" fill="#6e727b" /><polygon points="1183.8,660.1 1192.6,661.0 1192.8,672.6 1184.0,671.7" fill="#bbc1d0" /><polygon points="1193.2,661.0 1202.0,661.9 1202.2,673.5 1193.4,672.7" fill="#c1c7d4" /><polygon points="1209.0,661.4 1229.3,663.3 1229.4,678.5 1209.2,676.5" fill="#b9bdc6" /><polygon points="1209.2,676.5 1229.6,678.5 1229.6,681.2 1209.2,679.1" fill="#b8b9bd" /><polygon points="1209.2,679.1 1229.6,681.2 1229.6,682.7 1209.2,680.6" fill="#6e727b" /><polygon points="1209.9,662.6 1218.9,663.5 1219.1,675.2 1210.0,674.3" fill="#7d8497" /><polygon points="1219.5,663.5 1228.6,664.4 1228.7,676.2 1219.6,675.3" fill="#666c7b" /><polygon points="1090.4,672.9 1109.5,674.8 1110.2,689.5 1091.1,687.5" fill="#b9bdc6" /><polygon points="1091.1,687.5 1110.3,689.5 1110.4,692.1 1091.2,690.0" fill="#b8b9bd" /><polygon points="1091.2,690.0 1110.4,692.1 1110.5,693.5 1091.3,691.5" fill="#6e727b" /><polygon points="1091.3,674.1 1099.8,674.9 1100.3,686.3 1091.8,685.4" fill="#635e6a" /><polygon points="1100.4,675.0 1108.9,675.8 1109.3,687.2 1100.9,686.3" fill="#726e78" /><polygon points="1115.3,675.4 1134.5,677.3 1135.0,692.1 1115.9,690.1" fill="#b9bdc6" /><polygon points="1115.9,690.1 1135.1,692.1 1135.2,694.7 1116.0,692.6" fill="#b8b9bd" /><polygon points="1116.0,692.6 1135.2,694.7 1135.3,696.1 1116.1,694.1" fill="#6e727b" /><polygon points="1116.2,676.6 1124.7,677.5 1125.1,688.9 1116.7,688.0" fill="#c2c7d4" /><polygon points="1125.3,677.5 1133.8,678.4 1134.2,689.8 1125.7,688.9" fill="#9fa3ad" /><polygon points="1143.9,678.3 1182.3,682.2 1182.6,697.1 1144.3,693.1" fill="#8b96aa" /><polygon points="1144.3,693.1 1182.8,697.1 1182.8,699.7 1144.4,695.6" fill="#8a93a4" /><polygon points="1144.4,695.6 1182.8,699.7 1182.9,701.2 1144.4,697.1" fill="#566074" /><polygon points="1144.8,679.5 1153.5,680.4 1153.9,691.9 1145.1,690.9" fill="#99abc8" /><polygon points="1154.1,680.4 1162.9,681.3 1163.2,692.8 1154.4,691.9" fill="#a3b3cd" /><polygon points="1163.5,681.4 1172.3,682.3 1172.5,693.8 1163.8,692.9" fill="#99abc8" /><polygon points="1172.9,682.4 1181.6,683.2 1181.9,694.8 1173.1,693.9" fill="#a3b3cd" /><polygon points="1183.3,682.3 1203.1,684.3 1203.3,699.3 1183.6,697.2" fill="#b9bdc6" /><polygon points="1183.6,697.2 1203.5,699.3 1203.5,701.9 1183.7,699.8" fill="#b8b9bd" /><polygon points="1183.7,699.8 1203.5,701.9 1203.5,703.4 1183.7,701.3" fill="#6e727b" /><polygon points="1184.2,683.5 1193.0,684.4 1193.2,696.0 1184.5,695.1" fill="#c2c7d4" /><polygon points="1193.6,684.5 1202.4,685.4 1202.6,697.0 1193.8,696.0" fill="#9fa3ad" /><polygon points="1209.3,684.9 1229.5,687.0 1229.6,702.0 1209.5,699.9" fill="#b9bdc6" /><polygon points="1209.5,699.9 1229.7,702.0 1229.7,704.7 1209.5,702.5" fill="#b8b9bd" /><polygon points="1209.5,702.5 1229.7,704.7 1229.7,706.2 1209.5,704.0" fill="#6e727b" /><polygon points="1210.2,686.2 1219.2,687.1 1219.3,698.7 1210.3,697.8" fill="#bbc1cd" /><polygon points="1219.8,687.1 1228.8,688.0 1228.8,699.7 1219.9,698.8" fill="#c1c7d2" /><polygon points="1091.4,695.7 1110.5,697.7 1111.1,712.3 1092.1,710.2" fill="#b9bdc6" /><polygon points="1092.1,710.2 1111.2,712.3 1111.3,714.8 1092.2,712.7" fill="#b8b9bd" /><polygon points="1092.2,712.7 1111.3,714.8 1111.4,716.3 1092.3,714.1" fill="#6e727b" /><polygon points="1092.4,696.8 1100.8,697.7 1101.3,709.0 1092.9,708.1" fill="#969eb7" /><polygon points="1101.4,697.8 1109.8,698.7 1110.3,710.0 1101.9,709.1" fill="#7b8196" /><polygon points="1116.2,698.3 1135.3,700.4 1135.8,715.0 1116.8,712.9" fill="#b9bdc6" /><polygon points="1116.8,712.9 1135.9,715.0 1136.0,717.6 1116.9,715.4" fill="#b8b9bd" /><polygon points="1116.9,715.4 1136.0,717.6 1136.0,719.0 1117.0,716.9" fill="#6e727b" /><polygon points="1117.1,699.5 1125.6,700.4 1126.0,711.7 1117.6,710.8" fill="#b55150" /><polygon points="1126.1,700.5 1134.6,701.4 1135.0,712.7 1126.6,711.8" fill="#c8ccd6" /><polygon points="1144.6,701.4 1182.8,705.5 1183.1,720.2 1145.0,716.0" fill="#8b96aa" /><polygon points="1145.0,716.0 1183.3,720.3 1183.3,722.8 1145.1,718.6" fill="#8a93a4" /><polygon points="1145.1,718.6 1183.3,722.8 1183.3,724.3 1145.2,720.0" fill="#566074" /><polygon points="1145.5,702.5 1154.2,703.5 1154.5,714.9 1145.8,713.9" fill="#99697d" /><polygon points="1154.8,703.5 1163.5,704.5 1163.8,715.9 1155.1,714.9" fill="#c8ccd6" /><polygon points="1164.1,704.5 1172.8,705.5 1173.1,716.9 1164.4,716.0" fill="#99697d" /><polygon points="1173.4,705.5 1182.1,706.5 1182.4,718.0 1173.6,717.0" fill="#c8ccd6" /><polygon points="1183.8,705.6 1203.4,707.7 1203.6,722.5 1184.1,720.4" fill="#b9bdc6" /><polygon points="1184.1,720.4 1203.8,722.5 1203.8,725.1 1184.2,722.9" fill="#b8b9bd" /><polygon points="1184.2,722.9 1203.8,725.1 1203.8,726.6 1184.2,724.4" fill="#6e727b" /><polygon points="1184.7,706.8 1193.4,707.7 1193.6,719.2 1184.9,718.2" fill="#b55150" /><polygon points="1194.0,707.8 1202.7,708.7 1202.9,720.2 1194.2,719.3" fill="#c8ccd6" /><polygon points="1209.6,708.3 1229.6,710.5 1229.7,725.4 1209.8,723.2" fill="#b9bdc6" /><polygon points="1209.8,723.2 1229.9,725.4 1229.9,728.0 1209.8,725.8" fill="#b8b9bd" /><polygon points="1209.8,725.8 1229.9,728.0 1229.9,729.5 1209.8,727.3" fill="#6e727b" /><polygon points="1210.5,709.5 1219.4,710.5 1219.5,722.1 1210.6,721.1" fill="#a2a7b7" /><polygon points="1220.0,710.6 1228.9,711.5 1229.0,723.1 1220.1,722.1" fill="#848896" /><polygon points="1092.5,718.3 1111.4,720.4 1112.0,734.9 1093.2,732.7" fill="#b9bdc6" /><polygon points="1093.2,732.7 1112.2,734.9 1112.3,737.4 1093.3,735.2" fill="#b8b9bd" /><polygon points="1093.3,735.2 1112.3,737.4 1112.3,738.9 1093.4,736.6" fill="#6e727b" /><polygon points="1093.4,719.5 1101.8,720.4 1102.3,731.6 1093.9,730.6" fill="#564c5d" /><polygon points="1102.4,720.5 1110.8,721.4 1111.2,732.6 1102.9,731.7" fill="#665d6d" /><polygon points="1117.1,721.1 1136.0,723.2 1136.5,737.8 1117.7,735.6" fill="#b9bdc6" /><polygon points="1117.7,735.6 1136.7,737.8 1136.8,740.3 1117.8,738.1" fill="#b8b9bd" /><polygon points="1117.8,738.1 1136.8,740.3 1136.8,741.8 1117.9,739.5" fill="#6e727b" /><polygon points="1118.0,722.3 1126.4,723.2 1126.8,734.5 1118.5,733.5" fill="#706e70" /><polygon points="1127.0,723.3 1135.4,724.2 1135.8,735.5 1127.4,734.5" fill="#5b5a5b" /><polygon points="1145.3,724.3 1183.3,728.5 1183.6,743.2 1145.8,738.8" fill="#8b96aa" /><polygon points="1145.8,738.8 1183.7,743.3 1183.8,745.8 1145.8,741.4" fill="#8a93a4" /><polygon points="1145.8,741.4 1183.8,745.8 1183.8,747.3 1145.9,742.8" fill="#566074" /><polygon points="1146.2,725.4 1154.9,726.4 1155.2,737.8 1146.5,736.7" fill="#617088" /><polygon points="1155.4,726.5 1164.1,727.5 1164.4,738.8 1155.7,737.8" fill="#707e93" /><polygon points="1164.7,727.5 1173.3,728.5 1173.6,739.9 1165.0,738.9" fill="#617088" /><polygon points="1173.9,728.6 1182.6,729.6 1182.8,741.0 1174.2,740.0" fill="#707e93" /><polygon points="1184.3,728.7 1203.8,730.9 1204.0,745.6 1184.6,743.4" fill="#b9bdc6" /><polygon points="1184.6,743.4 1204.1,745.6 1204.2,748.2 1184.6,745.9" fill="#b8b9bd" /><polygon points="1184.6,745.9 1204.2,748.2 1204.2,749.7 1184.7,747.4" fill="#6e727b" /><polygon points="1185.2,729.9 1193.8,730.8 1194.0,742.3 1185.4,741.3" fill="#636264" /><polygon points="1194.4,730.9 1203.1,731.9 1203.2,743.3 1194.6,742.3" fill="#515052" /><polygon points="1209.9,731.6 1229.8,733.8 1229.9,748.7 1210.1,746.3" fill="#b9bdc6" /><polygon points="1210.1,746.3 1230.1,748.7 1230.1,751.3 1210.1,748.9" fill="#b8b9bd" /><polygon points="1210.1,748.9 1230.1,751.3 1230.1,752.7 1210.1,750.4" fill="#6e727b" /><polygon points="1210.8,732.8 1219.6,733.8 1219.8,745.3 1210.9,744.2" fill="#a2a4b0" /><polygon points="1220.2,733.8 1229.1,734.8 1229.2,746.4 1220.3,745.3" fill="#abadb7" /><polygon points="1093.6,740.8 1112.4,743.0 1113.0,757.4 1094.2,755.1" fill="#b9bdc6" /><polygon points="1094.2,755.1 1113.1,757.4 1113.2,759.9 1094.4,757.6" fill="#b8b9bd" /><polygon points="1094.4,757.6 1113.2,759.9 1113.3,761.3 1094.4,759.0" fill="#6e727b" /><polygon points="1094.5,741.9 1102.8,742.9 1103.3,754.1 1095.0,753.0" fill="#9a98a8" /><polygon points="1103.4,743.0 1111.7,744.0 1112.2,755.1 1103.9,754.1" fill="#7e7c89" /><polygon points="1118.0,743.7 1136.8,745.9 1137.3,760.4 1118.6,758.1" fill="#b9bdc6" /><polygon points="1118.6,758.1 1137.5,760.4 1137.5,762.9 1118.7,760.6" fill="#b8b9bd" /><polygon points="1118.7,760.6 1137.5,762.9 1137.6,764.3 1118.7,762.0" fill="#6e727b" /><polygon points="1118.9,744.9 1127.2,745.9 1127.7,757.0 1119.3,756.0" fill="#8a8890" /><polygon points="1127.8,745.9 1136.1,746.9 1136.5,758.1 1128.2,757.1" fill="#95939b" /><polygon points="1146.0,747.0 1183.7,751.5 1184.0,766.1 1146.5,761.5" fill="#8b96aa" /><polygon points="1146.5,761.5 1184.2,766.1 1184.2,768.7 1146.5,764.0" fill="#8a93a4" /><polygon points="1146.5,764.0 1184.2,768.7 1184.3,770.1 1146.6,765.5" fill="#566074" /><polygon points="1146.9,748.2 1155.5,749.2 1155.8,760.5 1147.2,759.4" fill="#91a2bf" /><polygon points="1156.1,749.3 1164.7,750.3 1165.0,761.6 1156.4,760.5" fill="#76849c" /><polygon points="1165.3,750.4 1173.9,751.4 1174.1,762.7 1165.5,761.7" fill="#91a2bf" /><polygon points="1174.4,751.5 1183.1,752.5 1183.3,763.8 1174.7,762.8" fill="#76849c" /><polygon points="1184.7,751.6 1204.1,753.9 1204.3,768.6 1185.0,766.2" fill="#b9bdc6" /><polygon points="1185.0,766.2 1204.5,768.6 1204.5,771.2 1185.1,768.8" fill="#b8b9bd" /><polygon points="1185.1,768.8 1204.5,771.2 1204.5,772.6 1185.1,770.2" fill="#6e727b" /><polygon points="1185.6,752.8 1194.2,753.8 1194.4,765.2 1185.8,764.1" fill="#7a7880" /><polygon points="1194.8,753.9 1203.4,754.9 1203.6,766.3 1195.0,765.3" fill="#87858c" /><polygon points="1210.2,754.6 1230.0,757.0 1230.1,771.7 1210.4,769.3" fill="#b9bdc6" /><polygon points="1210.4,769.3 1230.2,771.8 1230.2,774.3 1210.4,771.9" fill="#b8b9bd" /><polygon points="1210.4,771.9 1230.2,774.3 1230.2,775.8 1210.4,773.4" fill="#6e727b" /><polygon points="1211.0,755.8 1219.9,756.9 1220.0,768.3 1211.2,767.2" fill="#6a6878" /><polygon points="1220.4,757.0 1229.3,758.0 1229.4,769.4 1220.6,768.4" fill="#565562" /><polygon points="1094.6,763.1 1113.3,765.4 1113.9,779.7 1095.3,777.3" fill="#b9bdc6" /><polygon points="1095.3,777.3 1114.0,779.7 1114.1,782.2 1095.4,779.8" fill="#b8b9bd" /><polygon points="1095.4,779.8 1114.1,782.2 1114.2,783.6 1095.5,781.2" fill="#6e727b" /><polygon points="1095.5,764.3 1103.8,765.3 1104.3,776.4 1096.0,775.3" fill="#a0a8c0" /><polygon points="1104.3,765.4 1112.6,766.4 1113.1,777.5 1104.8,776.4" fill="#a9b0c6" /><polygon points="1118.9,766.1 1137.6,768.5 1138.1,782.8 1119.5,780.4" fill="#b9bdc6" /><polygon points="1119.5,780.4 1138.2,782.8 1138.3,785.3 1119.6,782.9" fill="#b8b9bd" /><polygon points="1119.6,782.9 1138.3,785.3 1138.3,786.8 1119.6,784.4" fill="#6e727b" /><polygon points="1119.8,767.3 1128.1,768.4 1128.5,779.5 1120.2,778.4" fill="#5a5450" /><polygon points="1128.6,768.4 1136.9,769.5 1137.3,780.6 1129.0,779.5" fill="#494441" /><polygon points="1146.7,769.6 1184.2,774.3 1184.5,788.8 1147.2,784.0" fill="#8b96aa" /><polygon points="1147.2,784.0 1184.6,788.8 1184.7,791.3 1147.2,786.5" fill="#8a93a4" /><polygon points="1147.2,786.5 1184.7,791.3 1184.7,792.8 1147.3,787.9" fill="#566074" /><polygon points="1147.6,770.8 1156.2,771.9 1156.5,783.0 1147.9,781.9" fill="#6a7891" /><polygon points="1156.7,771.9 1165.3,773.0 1165.6,784.2 1157.0,783.1" fill="#78859c" /><polygon points="1165.8,773.1 1174.4,774.1 1174.7,785.4 1166.1,784.3" fill="#6a7891" /><polygon points="1175.0,774.2 1183.5,775.3 1183.8,786.5 1175.2,785.4" fill="#78859c" /><polygon points="1185.2,774.4 1204.4,776.8 1204.6,791.4 1185.5,788.9" fill="#b9bdc6" /><polygon points="1185.5,788.9 1204.8,791.4 1204.8,793.9 1185.5,791.5" fill="#b8b9bd" /><polygon points="1185.5,791.5 1204.8,793.9 1204.8,795.4 1185.6,792.9" fill="#6e727b" /><polygon points="1186.1,775.6 1194.6,776.7 1194.8,787.9 1186.3,786.9" fill="#5a5450" /><polygon points="1195.2,776.7 1203.7,777.8 1203.9,789.1 1195.4,788.0" fill="#494441" /><polygon points="1210.5,777.6 1230.1,780.0 1230.2,794.7 1210.7,792.2" fill="#b9bdc6" /><polygon points="1210.7,792.2 1230.4,794.7 1230.4,797.2 1210.7,794.7" fill="#b8b9bd" /><polygon points="1210.7,794.7 1230.4,797.2 1230.4,798.7 1210.7,796.2" fill="#6e727b" /><polygon points="1211.3,778.8 1220.1,779.9 1220.2,791.2 1211.5,790.1" fill="#9a8880" /><polygon points="1220.7,779.9 1229.4,781.0 1229.5,792.4 1220.8,791.3" fill="#a4938c" /><polygon points="1073.0,394.0 1231.2,399.7 1231.2,405.3 1073.0,399.6" fill="#8f9298" /><polygon points="1073.8,399.6 1231.2,405.3 1230.5,414.0 1075.0,407.8" fill="#b4b7bd" /><polygon points="1073.0,394.0 1090.3,383.8 1250.5,387.4 1231.2,399.7" fill="#c9cbcf" /><polygon points="1084.0,392.6 1097.0,385.8 1238.0,389.0 1226.0,397.0" fill="#a9acb2" /><polygon points="1090.0,391.6 1100.0,387.0 1200.0,389.3 1196.0,394.5" fill="#c6c8cc" /><polygon points="1231.2,399.7 1252.5,388.0 1252.6,392.5 1231.3,405.2" fill="#e2e2e2" /><polygon points="1153.0,364.3 1204.4,365.0 1204.4,386.0 1153.0,385.0" fill="#b0b3b8" /><polygon points="1190.0,365.0 1204.4,365.0 1204.4,392.0 1197.0,392.0 1197.0,371.0 1190.0,371.0" fill="#d4d4d6" /><polygon points="1137.7,370.6 1191.4,371.5 1191.4,384.8 1137.7,383.8" fill="#9da0a6" /><polygon points="1183.0,371.4 1191.4,371.5 1191.4,386.0 1183.0,385.8" fill="#cfcfd2" /><polygon points="1204.4,365.0 1205.5,364.5 1205.5,391.0 1204.4,392.0" fill="#e4e4e4" /></svg>
<div class="b" style="left:347px;top:126px;width:1835px;height:1px;background:#8a8f94;"></div>
<div class="b" style="left:347px;top:124px;width:1835px;height:2px;background:#1890ff;"></div>
<div class="b" style="left:346.5px;top:100px;width:1835.5px;height:883px;overflow:hidden;">
<div class="b" style="left:-4.5px;top:20px;width:10px;height:10px;border-radius:50%;background:#fff;border:2px solid #1890ff;box-sizing:border-box;"></div>
<div class="b" style="left:913.0px;top:20px;width:10px;height:10px;border-radius:50%;background:#fff;border:2px solid #1890ff;box-sizing:border-box;"></div>
<div class="b" style="left:1830.0px;top:20px;width:10px;height:10px;border-radius:50%;background:#fff;border:2px solid #1890ff;box-sizing:border-box;"></div>
<div class="b" style="left:-4.5px;top:538px;width:10px;height:10px;border-radius:50%;background:#fff;border:2px solid #1890ff;box-sizing:border-box;"></div>
<div class="b" style="left:1830.0px;top:538px;width:10px;height:10px;border-radius:50%;background:#fff;border:2px solid #1890ff;box-sizing:border-box;"></div>
</div>
<div class="b" style="left:366px;top:146.5px;width:100px;height:39.5px;background:#808a9c;border-radius:5px;"></div>
<div class="b" style="left:415px;top:146.5px;width:1px;height:39.5px;background:#a3abb9;"></div>
<svg class="b" style="left:380px;top:155px;" width="22" height="21" viewBox="0 0 22 21"><path d="M11 2.300v8" stroke="#fff" stroke-width="1.600"/><path d="M7.600 8.200L11 14.200l3.400-6z" fill="#fff"/><path d="M7 9.600c-2.600.700-4.300 2.100-4.300 3.700 0 2.500 3.700 4.500 8.300 4.500s8.300-2 8.300-4.500c0-1.600-1.700-3-4.300-3.700" fill="none" stroke="#e6e9ee" stroke-width="1.200"/></svg>
<svg class="b" style="left:430px;top:154px;" width="22" height="22" viewBox="0 0 22 22"><rect x="4.200" y="2.500" width="5.200" height="5.200" rx="1.500" fill="none" stroke="#e6e9ee" stroke-width="1.100"/><rect x="13.300" y="8" width="4.800" height="6.200" rx="1.500" fill="none" stroke="#e6e9ee" stroke-width="1.100"/><path d="M9.400 5.100h2.800c2 0 3.500 1.300 3.500 2.900M15.700 14.200c0 1.700-1.500 2.800-3.500 2.800h-1.400" fill="none" stroke="#e6e9ee" stroke-width="1.100"/><rect x="3.500" y="13.200" width="7" height="7" rx="1.200" fill="#fff"/><rect x="5.900" y="15.600" width="2.200" height="2.200" fill="#808a9c"/></svg>
<div class="b" style="left:2028px;top:142px;width:135.5px;height:45px;background:#27282b;border-radius:3px;"></div>
<div class="b" style="left:2118px;top:142px;width:45.5px;height:45px;background:#0a8dff;border-radius:0 3px 3px 0;"></div>
<svg class="b" style="left:2039px;top:152.5px;" width="23" height="23" viewBox="0 0 23 23"><circle cx="11.500" cy="11.500" r="10" fill="none" stroke="#bfbfbf" stroke-width="1.500"/><path d="M2 13c5 2 13 2 19-1M13 1.500c1.500 6 1.500 14 0 20" fill="none" stroke="#bfbfbf" stroke-width="1.500"/></svg>
<div class="b" style="left:2084.500px;top:153px;width:22px;height:22px;border-radius:50%;background:linear-gradient(160deg,#d2d2d2,#b9b9b9);"></div>
<svg class="b" style="left:2129px;top:152.5px;" width="23" height="23" viewBox="0 0 23 23"><circle cx="11.500" cy="11.500" r="10" fill="none" stroke="#d2cbc3" stroke-width="1.700"/><path d="M11.500 6.500c3 .300 5.200 2.500 5.700 5.500" fill="none" stroke="#d2cbc3" stroke-width="1.700" stroke-linecap="round"/></svg>
<div class="b" style="left:2182px;top:25px;width:376px;height:958px;background:#131416;"></div>
<div class="b" style="left:2182px;top:25px;width:1px;height:958px;background:#1d1e20;"></div>
<svg class="b" style="left:2198px;top:41px;" width="15" height="17" viewBox="0 0 15 17"><rect x="1" y="1" width="12.500" height="14.500" rx="1.500" fill="none" stroke="#9a9a9a" stroke-width="1.300"/><path d="M3.500 4.500h8M3.500 7.300h8M3.500 10.100h8M3.500 12.800h8M5.800 3v11.500" stroke="#9a9a9a" stroke-width="1.100"/></svg>
<div class="t" style="left:2216px;top:41.0px;font-size:15px;line-height:19px;height:19px;color:#9b9b9b;width:64.8px;text-align:justify;text-align-last:justify;text-justify:inter-character;">3D空场景</div>
<div class="t" style="left:2292.5px;top:41.0px;font-size:15px;line-height:19px;height:19px;color:#9b9b9b;width:30.6px;text-align:justify;text-align-last:justify;text-justify:inter-character;">场景</div>
<div class="t" style="left:2337px;top:41.0px;font-size:15px;line-height:19px;height:19px;color:#9b9b9b;width:45.6px;text-align:justify;text-align-last:justify;text-justify:inter-character;">模型层</div>
<div class="t" style="left:2397px;top:41.0px;font-size:15px;line-height:19px;height:19px;color:#fff;width:60.6px;text-align:justify;text-align-last:justify;text-justify:inter-character;">高层建筑</div>
<svg class="b" style="left:2283px;top:45px;" width="7" height="12" viewBox="0 0 7 12"><path d="M1 1l4.500 5L1 11" fill="none" stroke="#8a8a8a" stroke-width="1.200"/></svg>
<svg class="b" style="left:2327.5px;top:45px;" width="7" height="12" viewBox="0 0 7 12"><path d="M1 1l4.500 5L1 11" fill="none" stroke="#8a8a8a" stroke-width="1.200"/></svg>
<svg class="b" style="left:2387.5px;top:45px;" width="7" height="12" viewBox="0 0 7 12"><path d="M1 1l4.500 5L1 11" fill="none" stroke="#8a8a8a" stroke-width="1.200"/></svg>
<div class="b" style="left:2183px;top:74px;width:375px;height:1px;background:#262729;"></div>
<div class="t" style="left:2206px;top:88.0px;font-size:15px;line-height:19px;height:19px;color:#fff;width:30.6px;text-align:justify;text-align-last:justify;text-justify:inter-character;">样式</div>
<div class="t" style="left:2256px;top:88.0px;font-size:15px;line-height:19px;height:19px;color:#fff;width:30.6px;text-align:justify;text-align-last:justify;text-justify:inter-character;">交互</div>
<div class="t" style="left:2306px;top:88.0px;font-size:15px;line-height:19px;height:19px;color:#fff;width:30.6px;text-align:justify;text-align-last:justify;text-justify:inter-character;">数据</div>
<div class="t" style="left:2356px;top:88.0px;font-size:15px;line-height:19px;height:19px;color:#fff;width:30.6px;text-align:justify;text-align-last:justify;text-justify:inter-character;">代码</div>
<div class="b" style="left:2196px;top:118px;width:50px;height:2px;background:#1890ff;"></div>
<div class="b" style="left:2438px;top:83px;width:100px;height:30px;background:#252627;border-radius:4px;"></div>
<div class="t" style="left:2447.5px;top:88.2px;font-size:15.5px;line-height:19.5px;height:19.5px;color:#fff;width:32.6px;text-align:justify;text-align-last:justify;text-justify:inter-character;">显示</div>
<svg class="b" style="left:2516px;top:94px;" width="15" height="9" viewBox="0 0 15 9"><path d="M1.200 1.200L7.500 7.200l6.300-6" fill="none" stroke="#f0f0f0" stroke-width="1.900"/></svg>
<div class="t" style="left:2195.5px;top:130.5px;font-size:20px;line-height:24px;height:24px;color:#fff;width:80.6px;text-align:justify;text-align-last:justify;text-justify:inter-character;">高层建筑</div>
<div class="t" style="left:2196px;top:154.5px;font-size:14px;line-height:18px;height:18px;color:#a8a8a8;width:42.6px;text-align:justify;text-align-last:justify;text-justify:inter-character;">库模型</div>
<div class="b" style="left:2183px;top:191.5px;width:375px;height:44.5px;background:#1c1c1d;"></div>
<svg class="b" style="left:2199.5px;top:211.5px;" width="10.5" height="7" viewBox="0 0 10.5 7"><path d="M0 0H10.5L5.25 7z" fill="#e0e0e0"/></svg>
<div class="t" style="left:2220px;top:203.5px;font-size:16px;line-height:20px;height:20px;color:#fff;width:32.6px;text-align:justify;text-align-last:justify;text-justify:inter-character;">基础</div>
<div class="b" style="left:2189px;top:242px;width:363px;height:127px;background:transparent;border:1px solid #4b4b4b;box-sizing:border-box;border-radius:2px;"></div>
<div class="b" style="left:2190px;top:243px;width:361px;height:40px;background:#1f1f20;"></div>
<svg class="b" style="left:2195px;top:260px;" width="12" height="8" viewBox="0 0 12 8"><path d="M1 1l5 5 5-5" fill="none" stroke="#bdbdbd" stroke-width="1.200"/></svg>
<div class="t" style="left:2212.5px;top:254.5px;font-size:15px;line-height:19px;height:19px;color:#e6e6e6;width:30.6px;text-align:justify;text-align-last:justify;text-justify:inter-character;">选择</div>
<div class="t" style="left:2196.5px;top:295.0px;font-size:15px;line-height:19px;height:19px;color:#d8d8d8;width:60.6px;text-align:justify;text-align-last:justify;text-justify:inter-character;">使用独立</div>
<div class="t" style="left:2196.5px;top:338.0px;font-size:15px;line-height:19px;height:19px;color:#d8d8d8;width:45.6px;text-align:justify;text-align-last:justify;text-justify:inter-character;">选择原</div>
<div class="t" style="left:2189px;top:388.0px;font-size:15px;line-height:19px;height:19px;color:#e0e0e0;width:60.6px;text-align:justify;text-align-last:justify;text-justify:inter-character;">是否显示</div>
<div class="b" style="left:2238px;top:128px;width:300px;height:413px;background:#1f1f1f;border-radius:5px;box-shadow:0 2px 10px rgba(0,0,0,.45);"></div>
<div class="b" style="left:2238px;top:178px;width:300px;height:1px;background:#2a2a2a;"></div>
<div class="b" style="left:2252px;top:137px;width:115px;height:30px;background:transparent;border:1px solid #c4c4c4;border-radius:3px;box-sizing:border-box;"></div>
<svg class="b" style="left:2268px;top:146px;" width="12" height="12" viewBox="0 0 12 12"><path d="M6 .500v11M.500 6h11" stroke="#d8d8d8" stroke-width="1.200"/></svg>
<div class="t" style="left:2286px;top:143.0px;font-size:15px;line-height:19px;height:19px;color:#d8d8d8;width:60.6px;text-align:justify;text-align-last:justify;text-justify:inter-character;">新建状态</div>
<svg class="b" style="left:2470px;top:144px;" width="17" height="17" viewBox="0 0 17 17"><path d="M14.500 8.500v5.300c0 .900-.700 1.700-1.700 1.700H3.200c-.900 0-1.700-.800-1.700-1.700V4.200c0-.900.800-1.700 1.700-1.700h5.300" fill="none" stroke="#d6d6d6" stroke-width="1.400"/><path d="M6 11.300l.500-2.800 7-7 2.200 2.200-7 7z" fill="none" stroke="#d6d6d6" stroke-width="1.400" stroke-linejoin="round"/></svg>
<svg class="b" style="left:2501px;top:144px;" width="17" height="18" viewBox="0 0 17 18"><rect x="4.500" y="4.500" width="11" height="12" rx="2" fill="none" stroke="#d6d6d6" stroke-width="1.400"/><path d="M12.500 4.200V3c0-1-.700-1.800-1.700-1.800H3c-1 0-1.800.800-1.800 1.800v9c0 1 .800 1.700 1.800 1.700h1.300" fill="none" stroke="#d6d6d6" stroke-width="1.400"/><path d="M12.800 13.500L8 8.700M8 12.300V8.600h3.700" fill="none" stroke="#d6d6d6" stroke-width="1.300"/></svg>
<svg class="b" style="left:2252px;top:206px;" width="15" height="12" viewBox="0 0 15 12"><path d="M1.500 6.500l3.800 3.700L13 2" fill="none" stroke="#1890ff" stroke-width="1.800"/></svg>
<div class="t" style="left:2274.5px;top:202.0px;font-size:15px;line-height:19px;height:19px;color:#1890ff;width:30.6px;text-align:justify;text-align-last:justify;text-justify:inter-character;">显示</div>
<div class="b" style="left:2256.300px;top:261.700px;width:5px;height:5px;border-radius:50%;background:#d0d0d0;"></div>
<div class="t" style="left:2274.5px;top:254.3px;font-size:15px;line-height:19px;height:19px;color:#d2d2d2;width:30.6px;text-align:justify;text-align-last:justify;text-justify:inter-character;">隐藏</div>
<svg class="b" style="left:0;top:0" width="2558" height="983"><rect x="2233.300" y="183.500" width="138.800" height="97.600" rx="6" fill="none" stroke="#e8432c" stroke-width="5"/><path d="M1657 529.500L2180 248" stroke="#e8432c" stroke-width="4.200" stroke-linecap="round"/><path d="M2190.100 241.300L2171.800 242.400L2178 246.500L2176.500 249.500L2179.300 257.200z" fill="#e8432c"/></svg>
</div>
</body></html>
